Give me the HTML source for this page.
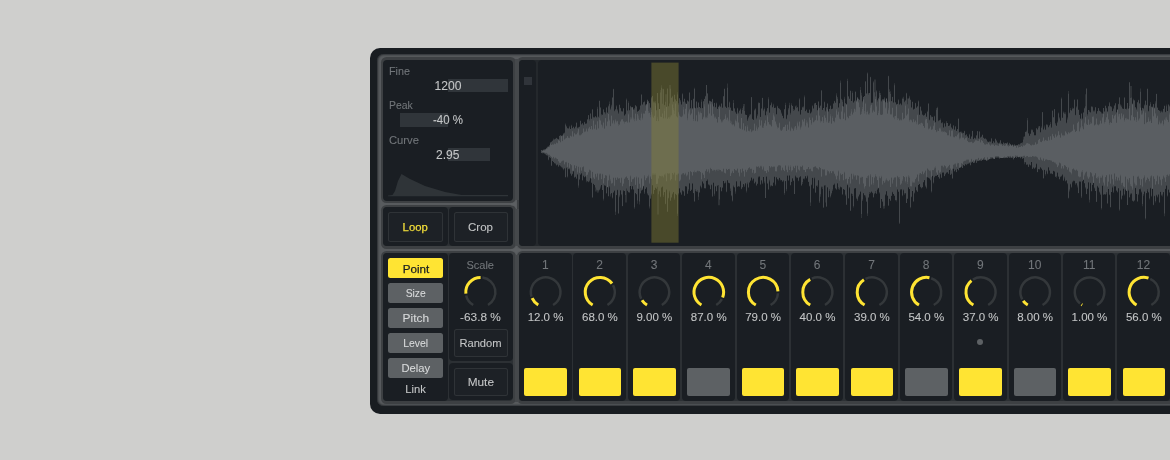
<!DOCTYPE html>
<html><head><meta charset="utf-8"><title>Device</title>
<style>
html,body{margin:0;padding:0;}
body{width:1170px;height:460px;overflow:hidden;background:#cfcfcd;position:relative;font-family:"Liberation Sans",sans-serif;}
#root{position:absolute;left:0;top:0;width:1170px;height:460px;overflow:hidden;}
#root div{position:absolute;box-sizing:border-box;}
svg{position:absolute;left:0;top:0;will-change:transform;}
svg text{font-family:"Liberation Sans",sans-serif;stroke:currentColor;stroke-width:0.08px;}
</style></head><body>
<div id="root">
<div style="left:370.20px;top:47.80px;width:820.00px;height:365.80px;background:#191d21;border-radius:10px;"></div>
<div style="left:376.90px;top:53.90px;width:820.00px;height:352.60px;background:#585b5e;border-radius:6.5px;box-shadow:inset 0 0 2.2px 0.6px #191d21;"></div>
<div style="left:380.50px;top:57.00px;width:135.00px;height:146.30px;background:#3d4043;border-radius:5.5px;"></div>
<div style="left:383.00px;top:59.50px;width:130.00px;height:141.30px;background:#1a1e23;border-radius:4px;"></div>
<div style="left:380.50px;top:204.90px;width:135.00px;height:43.90px;background:#3d4043;border-radius:5.5px;"></div>
<div style="left:383.00px;top:207.40px;width:130.00px;height:38.90px;background:#2c3034;border-radius:4px;"></div>
<div style="left:383.00px;top:207.40px;width:64.50px;height:38.90px;background:#1a1e23;border-radius:4px;"></div>
<div style="left:448.80px;top:207.40px;width:64.20px;height:38.90px;background:#1a1e23;border-radius:4px;"></div>
<div style="left:516.50px;top:57.00px;width:686.00px;height:191.80px;background:#3d4043;border-radius:5.5px;"></div>
<div style="left:519.00px;top:59.50px;width:700.00px;height:186.80px;background:#24282c;border-radius:4px;"></div>
<div style="left:519.00px;top:59.50px;width:17.30px;height:186.80px;background:#1a1e23;border-radius:4px;"></div>
<div style="left:538.20px;top:59.50px;width:661.80px;height:186.80px;background:#1a1e23;border-radius:4px;"></div>
<div style="left:380.50px;top:250.50px;width:135.00px;height:153.00px;background:#3d4043;border-radius:5.5px;"></div>
<div style="left:383.00px;top:253.00px;width:130.00px;height:147.50px;background:#2c3034;border-radius:4px;"></div>
<div style="left:383.00px;top:253.00px;width:64.50px;height:147.50px;background:#1a1e23;border-radius:4px;"></div>
<div style="left:448.80px;top:253.00px;width:64.20px;height:107.50px;background:#1a1e23;border-radius:4px;"></div>
<div style="left:448.80px;top:363.30px;width:64.20px;height:37.20px;background:#1a1e23;border-radius:4px;"></div>
<div style="left:516.50px;top:250.50px;width:686.00px;height:153.00px;background:#3d4043;border-radius:5.5px;"></div>
<div style="left:519.00px;top:253.00px;width:700.00px;height:147.50px;background:#2c3034;border-radius:4px;"></div>
<div style="left:519.00px;top:253.00px;width:52.50px;height:147.50px;background:#1a1e23;border-radius:4px;"></div>
<div style="left:573.39px;top:253.00px;width:52.50px;height:147.50px;background:#1a1e23;border-radius:4px;"></div>
<div style="left:627.78px;top:253.00px;width:52.50px;height:147.50px;background:#1a1e23;border-radius:4px;"></div>
<div style="left:682.17px;top:253.00px;width:52.50px;height:147.50px;background:#1a1e23;border-radius:4px;"></div>
<div style="left:736.56px;top:253.00px;width:52.50px;height:147.50px;background:#1a1e23;border-radius:4px;"></div>
<div style="left:790.95px;top:253.00px;width:52.50px;height:147.50px;background:#1a1e23;border-radius:4px;"></div>
<div style="left:845.34px;top:253.00px;width:52.50px;height:147.50px;background:#1a1e23;border-radius:4px;"></div>
<div style="left:899.73px;top:253.00px;width:52.50px;height:147.50px;background:#1a1e23;border-radius:4px;"></div>
<div style="left:954.12px;top:253.00px;width:52.50px;height:147.50px;background:#1a1e23;border-radius:4px;"></div>
<div style="left:1008.51px;top:253.00px;width:52.50px;height:147.50px;background:#1a1e23;border-radius:4px;"></div>
<div style="left:1062.90px;top:253.00px;width:52.50px;height:147.50px;background:#1a1e23;border-radius:4px;"></div>
<div style="left:1117.29px;top:253.00px;width:52.50px;height:147.50px;background:#1a1e23;border-radius:4px;"></div>
<div style="left:1171.68px;top:253.00px;width:52.50px;height:147.50px;background:#1a1e23;border-radius:4px;"></div>
<div style="left:515.40px;top:59.00px;width:3.40px;height:140.50px;background:#45484b;border-radius:0px;"></div>
<div style="left:515.40px;top:209.00px;width:3.40px;height:36.50px;background:#45484b;border-radius:0px;"></div>
<div style="left:515.40px;top:254.60px;width:3.40px;height:147.70px;background:#45484b;border-radius:0px;"></div>
<div style="left:448.00px;top:79.00px;width:60.00px;height:13.00px;background:#30353a;border-radius:0px;"></div>
<div style="left:400.00px;top:113.00px;width:48.00px;height:13.50px;background:#30353a;border-radius:0px;"></div>
<div style="left:448.00px;top:148.00px;width:42.00px;height:13.00px;background:#30353a;border-radius:0px;"></div>
<div style="left:524.30px;top:77.00px;width:7.70px;height:7.70px;background:#30343a;border-radius:0px;"></div>
<div style="left:388.00px;top:212.20px;width:55.00px;height:29.70px;background:#1d2126;border-radius:2.5px;box-shadow:inset 0 0 0 1px #2f3337;"></div>
<div style="left:453.60px;top:212.20px;width:54.60px;height:29.70px;background:#1d2126;border-radius:2.5px;box-shadow:inset 0 0 0 1px #2f3337;"></div>
<div style="left:454.10px;top:328.70px;width:54.00px;height:27.90px;background:#1d2126;border-radius:2.5px;box-shadow:inset 0 0 0 1px #2f3337;"></div>
<div style="left:454.10px;top:368.30px;width:54.00px;height:27.40px;background:#1d2126;border-radius:2.5px;box-shadow:inset 0 0 0 1px #2f3337;"></div>
<div style="left:388.00px;top:258.00px;width:55.00px;height:19.60px;background:#ffe433;border-radius:2.5px;"></div>
<div style="left:388.00px;top:283.00px;width:55.00px;height:19.60px;background:#5d6164;border-radius:2.5px;"></div>
<div style="left:388.00px;top:308.00px;width:55.00px;height:19.60px;background:#5d6164;border-radius:2.5px;"></div>
<div style="left:388.00px;top:333.00px;width:55.00px;height:19.60px;background:#5d6164;border-radius:2.5px;"></div>
<div style="left:388.00px;top:358.00px;width:55.00px;height:19.60px;background:#5d6164;border-radius:2.5px;"></div>
<div style="left:524.30px;top:368.30px;width:42.50px;height:27.40px;background:#ffe433;border-radius:2px;"></div>
<div style="left:578.69px;top:368.30px;width:42.50px;height:27.40px;background:#ffe433;border-radius:2px;"></div>
<div style="left:633.08px;top:368.30px;width:42.50px;height:27.40px;background:#ffe433;border-radius:2px;"></div>
<div style="left:687.47px;top:368.30px;width:42.50px;height:27.40px;background:#5d6164;border-radius:2px;"></div>
<div style="left:741.86px;top:368.30px;width:42.50px;height:27.40px;background:#ffe433;border-radius:2px;"></div>
<div style="left:796.25px;top:368.30px;width:42.50px;height:27.40px;background:#ffe433;border-radius:2px;"></div>
<div style="left:850.64px;top:368.30px;width:42.50px;height:27.40px;background:#ffe433;border-radius:2px;"></div>
<div style="left:905.03px;top:368.30px;width:42.50px;height:27.40px;background:#5d6164;border-radius:2px;"></div>
<div style="left:959.42px;top:368.30px;width:42.50px;height:27.40px;background:#ffe433;border-radius:2px;"></div>
<div style="left:1013.81px;top:368.30px;width:42.50px;height:27.40px;background:#5d6164;border-radius:2px;"></div>
<div style="left:1068.20px;top:368.30px;width:42.50px;height:27.40px;background:#ffe433;border-radius:2px;"></div>
<div style="left:1122.59px;top:368.30px;width:42.50px;height:27.40px;background:#ffe433;border-radius:2px;"></div>
<div style="left:1176.98px;top:368.30px;width:42.50px;height:27.40px;background:#ffe433;border-radius:2px;"></div>
<div style="left:977.37px;top:339.00px;width:6.00px;height:6.00px;background:#5d6164;border-radius:3px;"></div>
<svg width="1170" height="460" viewBox="0 0 1170 460">
<path d="M473.20 305.02 A14.8 14.8 0 0 1 466.16 295.45" fill="none" stroke="#34383b" stroke-width="2.5"/>
<path d="M482.40 277.51 A14.8 14.8 0 0 1 488.00 305.02" fill="none" stroke="#34383b" stroke-width="2.5"/>
<path d="M465.87 293.67 A14.8 14.8 0 0 1 480.60 277.40" fill="none" stroke="#ffe433" stroke-width="3.0"/>
<path d="M531.50 296.53 A14.8 14.8 0 1 1 553.05 305.02" fill="none" stroke="#34383b" stroke-width="2.5"/>
<path d="M538.25 305.02 A14.8 14.8 0 0 1 532.13 298.22" fill="none" stroke="#ffe433" stroke-width="3.0"/>
<path d="M612.98 285.02 A14.8 14.8 0 0 1 607.44 305.02" fill="none" stroke="#34383b" stroke-width="2.5"/>
<path d="M592.64 305.02 A14.8 14.8 0 1 1 612.01 283.50" fill="none" stroke="#ffe433" stroke-width="3.0"/>
<path d="M641.13 298.69 A14.8 14.8 0 1 1 661.83 305.02" fill="none" stroke="#34383b" stroke-width="2.5"/>
<path d="M647.03 305.02 A14.8 14.8 0 0 1 642.02 300.26" fill="none" stroke="#ffe433" stroke-width="3.0"/>
<path d="M721.89 299.15 A14.8 14.8 0 0 1 716.22 305.02" fill="none" stroke="#34383b" stroke-width="2.5"/>
<path d="M701.42 305.02 A14.8 14.8 0 1 1 722.64 297.50" fill="none" stroke="#ffe433" stroke-width="3.0"/>
<path d="M777.97 293.23 A14.8 14.8 0 0 1 770.61 305.02" fill="none" stroke="#34383b" stroke-width="2.5"/>
<path d="M755.81 305.02 A14.8 14.8 0 1 1 777.99 291.43" fill="none" stroke="#ffe433" stroke-width="3.0"/>
<path d="M811.82 278.58 A14.8 14.8 0 0 1 825.00 305.02" fill="none" stroke="#34383b" stroke-width="2.5"/>
<path d="M810.20 305.02 A14.8 14.8 0 0 1 810.20 279.38" fill="none" stroke="#ffe433" stroke-width="3.0"/>
<path d="M865.50 278.90 A14.8 14.8 0 0 1 879.39 305.02" fill="none" stroke="#34383b" stroke-width="2.5"/>
<path d="M864.59 305.02 A14.8 14.8 0 0 1 863.93 279.79" fill="none" stroke="#ffe433" stroke-width="3.0"/>
<path d="M931.20 278.21 A14.8 14.8 0 0 1 933.78 305.02" fill="none" stroke="#34383b" stroke-width="2.5"/>
<path d="M918.98 305.02 A14.8 14.8 0 0 1 929.46 277.72" fill="none" stroke="#ffe433" stroke-width="3.0"/>
<path d="M972.93 279.65 A14.8 14.8 0 1 1 988.17 305.02" fill="none" stroke="#34383b" stroke-width="2.5"/>
<path d="M973.37 305.02 A14.8 14.8 0 0 1 971.46 280.70" fill="none" stroke="#ffe433" stroke-width="3.0"/>
<path d="M1022.22 299.38 A14.8 14.8 0 1 1 1042.56 305.02" fill="none" stroke="#34383b" stroke-width="2.5"/>
<path d="M1027.76 305.02 A14.8 14.8 0 0 1 1023.19 300.90" fill="none" stroke="#ffe433" stroke-width="3.0"/>
<path d="M1080.04 303.54 A14.8 14.8 0 1 1 1096.95 305.02" fill="none" stroke="#34383b" stroke-width="2.5"/>
<path d="M1082.15 305.02 A14.8 14.8 0 0 1 1081.49 304.61" fill="none" stroke="#ffe433" stroke-width="3.0"/>
<path d="M1150.19 278.79 A14.8 14.8 0 0 1 1151.34 305.02" fill="none" stroke="#34383b" stroke-width="2.5"/>
<path d="M1136.54 305.02 A14.8 14.8 0 0 1 1148.51 278.12" fill="none" stroke="#ffe433" stroke-width="3.0"/>
<path d="M1200.13 277.51 A14.8 14.8 0 0 1 1205.73 305.02" fill="none" stroke="#34383b" stroke-width="2.5"/>
<path d="M1190.93 305.02 A14.8 14.8 0 0 1 1198.33 277.40" fill="none" stroke="#ffe433" stroke-width="3.0"/>
<path d="M541.0 151.6V150.1h0.5V150.0h0.5V150.5h0.5V150.3h0.5V149.8h0.5V149.5h0.5V149.4h0.5V149.2h0.5V149.1h0.5V148.9h0.5V148.1h0.5V147.7h0.5V147.0h0.5V146.4h0.5V146.7h0.5V146.2h0.5V145.5h0.5V144.9h0.5V142.6h0.5V142.2h0.5V142.1h0.5V141.4h0.5V141.1h0.5V140.6h0.5V139.7h0.5V138.6h0.5V139.7h0.5V139.0h0.5V139.1h0.5V138.4h0.5V138.1h0.5V137.7h0.5V139.0h0.5V138.5h0.5V139.5h0.5V138.9h0.5V136.0h0.5V135.7h0.5V135.4h0.5V135.0h0.5V136.1h0.5V135.6h0.5V135.6h0.5V135.4h0.5V133.5h0.5V133.4h0.5V133.2h0.5V132.6h0.5V124.7h0.5V123.5h0.5V126.7h0.5V125.7h0.5V128.1h0.5V128.5h0.5V128.9h0.5V128.0h0.5V127.3h0.5V125.8h0.5V128.9h0.5V128.9h0.5V125.7h0.5V124.7h0.5V127.9h0.5V128.3h0.5V127.0h0.5V126.4h0.5V128.5h0.5V128.2h0.5V127.1h0.5V126.2h0.5V122.7h0.5V122.5h0.5V128.3h0.5V127.5h0.5V127.4h0.5V127.2h0.5V126.8h0.5V126.7h0.5V121.1h0.5V120.4h0.5V124.4h0.5V124.2h0.5V123.1h0.5V123.6h0.5V124.4h0.5V125.2h0.5V121.7h0.5V122.2h0.5V123.9h0.5V123.6h0.5V123.9h0.5V123.1h0.5V119.3h0.5V119.4h0.5V115.0h0.5V115.2h0.5V120.4h0.5V119.1h0.5V113.3h0.5V113.8h0.5V119.1h0.5V118.4h0.5V109.0h0.5V109.7h0.5V117.4h0.5V116.8h0.5V117.3h0.5V117.4h0.5V116.6h0.5V116.0h0.5V117.8h0.5V116.9h0.5V106.7h0.5V108.8h0.5V117.3h0.5V116.4h0.5V100.8h0.5V100.7h0.5V107.4h0.5V107.6h0.5V113.9h0.5V115.3h0.5V114.5h0.5V114.9h0.5V109.1h0.5V109.7h0.5V112.1h0.5V112.6h0.5V114.2h0.5V112.6h0.5V107.9h0.5V106.9h0.5V112.2h0.5V112.9h0.5V105.6h0.5V106.6h0.5V104.0h0.5V101.6h0.5V108.4h0.5V109.7h0.5V104.7h0.5V106.4h0.5V97.4h0.5V97.4h0.5V89.2h0.5V88.8h0.5V111.2h0.5V110.4h0.5V109.8h0.5V108.9h0.5V105.2h0.5V106.5h0.5V109.2h0.5V110.4h0.5V112.4h0.5V113.7h0.5V105.1h0.5V104.6h0.5V107.7h0.5V108.3h0.5V111.5h0.5V110.8h0.5V111.2h0.5V111.8h0.5V108.2h0.5V108.3h0.5V115.5h0.5V115.5h0.5V114.4h0.5V113.7h0.5V99.8h0.5V98.4h0.5V110.5h0.5V110.6h0.5V103.0h0.5V101.2h0.5V110.5h0.5V110.1h0.5V106.6h0.5V105.8h0.5V107.6h0.5V107.0h0.5V107.3h0.5V107.4h0.5V109.9h0.5V108.9h0.5V109.6h0.5V108.0h0.5V105.5h0.5V105.1h0.5V106.3h0.5V106.5h0.5V111.9h0.5V111.3h0.5V111.1h0.5V110.8h0.5V109.6h0.5V109.8h0.5V105.0h0.5V105.9h0.5V95.0h0.5V94.1h0.5V104.4h0.5V104.5h0.5V102.4h0.5V102.1h0.5V101.9h0.5V100.8h0.5V105.4h0.5V104.4h0.5V104.3h0.5V104.3h0.5V99.8h0.5V101.7h0.5V101.1h0.5V101.5h0.5V103.1h0.5V103.2h0.5V107.3h0.5V107.9h0.5V97.1h0.5V98.3h0.5V95.7h0.5V96.0h0.5V101.3h0.5V102.5h0.5V102.6h0.5V101.4h0.5V102.8h0.5V101.1h0.5V110.5h0.5V110.1h0.5V93.1h0.5V93.1h0.5V103.3h0.5V103.2h0.5V108.9h0.5V109.1h0.5V92.4h0.5V90.0h0.5V85.3h0.5V87.7h0.5V88.7h0.5V103.8h0.5V89.2h0.5V88.8h0.5V105.2h0.5V104.8h0.5V101.7h0.5V94.2h0.5V94.2h0.5V106.8h0.5V88.1h0.5V88.9h0.5V106.6h0.5V105.9h0.5V103.6h0.5V84.9h0.5V84.9h0.5V88.7h0.5V98.1h0.5V97.6h0.5V95.8h0.5V96.7h0.5V101.2h0.5V101.9h0.5V94.9h0.5V94.5h0.5V99.8h0.5V99.1h0.5V101.3h0.5V101.0h0.5V92.3h0.5V94.4h0.5V104.4h0.5V103.1h0.5V97.9h0.5V98.4h0.5V101.6h0.5V100.1h0.5V104.8h0.5V104.2h0.5V93.2h0.5V94.3h0.5V101.8h0.5V101.5h0.5V98.7h0.5V98.7h0.5V103.4h0.5V102.2h0.5V103.7h0.5V104.1h0.5V101.0h0.5V100.1h0.5V101.6h0.5V101.6h0.5V93.1h0.5V92.0h0.5V108.0h0.5V108.4h0.5V99.9h0.5V100.2h0.5V108.6h0.5V108.4h0.5V98.4h0.5V99.1h0.5V87.7h0.5V89.1h0.5V108.6h0.5V108.0h0.5V101.2h0.5V101.7h0.5V107.2h0.5V108.0h0.5V102.5h0.5V102.4h0.5V107.1h0.5V106.9h0.5V108.0h0.5V108.3h0.5V101.7h0.5V99.4h0.5V108.2h0.5V108.0h0.5V101.6h0.5V101.1h0.5V98.9h0.5V98.8h0.5V96.6h0.5V95.7h0.5V84.9h0.5V84.9h0.5V93.6h0.5V93.2h0.5V104.8h0.5V103.6h0.5V100.7h0.5V100.7h0.5V102.3h0.5V101.0h0.5V101.7h0.5V101.7h0.5V98.7h0.5V99.3h0.5V105.9h0.5V106.9h0.5V102.8h0.5V103.0h0.5V107.0h0.5V107.5h0.5V102.5h0.5V103.4h0.5V108.8h0.5V109.1h0.5V106.4h0.5V106.9h0.5V105.7h0.5V104.7h0.5V106.5h0.5V106.8h0.5V103.0h0.5V104.0h0.5V107.6h0.5V107.8h0.5V96.1h0.5V96.5h0.5V88.7h0.5V88.7h0.5V106.8h0.5V106.4h0.5V108.1h0.5V107.8h0.5V87.7h0.5V83.4h0.5V107.1h0.5V107.5h0.5V102.4h0.5V101.6h0.5V107.2h0.5V108.1h0.5V110.2h0.5V110.7h0.5V110.7h0.5V111.1h0.5V100.1h0.5V102.9h0.5V108.5h0.5V108.3h0.5V112.4h0.5V111.4h0.5V114.1h0.5V113.5h0.5V107.8h0.5V108.5h0.5V112.5h0.5V113.5h0.5V110.6h0.5V110.7h0.5V108.6h0.5V109.5h0.5V113.4h0.5V113.7h0.5V108.0h0.5V109.9h0.5V106.3h0.5V104.0h0.5V104.0h0.5V111.0h0.5V114.7h0.5V114.4h0.5V114.9h0.5V115.1h0.5V119.6h0.5V121.0h0.5V118.3h0.5V117.0h0.5V114.4h0.5V116.0h0.5V113.9h0.5V114.7h0.5V97.3h0.5V96.9h0.5V119.3h0.5V118.8h0.5V120.1h0.5V119.7h0.5V109.4h0.5V110.4h0.5V109.3h0.5V108.3h0.5V119.2h0.5V117.8h0.5V115.7h0.5V114.2h0.5V102.3h0.5V103.3h0.5V102.7h0.5V102.9h0.5V116.7h0.5V116.9h0.5V108.8h0.5V108.3h0.5V97.7h0.5V97.9h0.5V110.7h0.5V109.4h0.5V107.5h0.5V108.9h0.5V115.3h0.5V115.2h0.5V110.7h0.5V111.7h0.5V108.3h0.5V108.0h0.5V99.2h0.5V97.2h0.5V112.4h0.5V112.8h0.5V105.0h0.5V105.6h0.5V103.6h0.5V102.2h0.5V107.5h0.5V107.1h0.5V103.7h0.5V105.4h0.5V108.1h0.5V107.9h0.5V107.7h0.5V107.4h0.5V114.1h0.5V114.6h0.5V106.6h0.5V105.8h0.5V108.2h0.5V107.9h0.5V109.0h0.5V108.4h0.5V109.7h0.5V110.3h0.5V113.7h0.5V112.5h0.5V115.7h0.5V115.8h0.5V117.9h0.5V118.5h0.5V109.0h0.5V109.4h0.5V105.1h0.5V102.8h0.5V119.2h0.5V118.4h0.5V114.4h0.5V115.3h0.5V109.6h0.5V108.1h0.5V105.3h0.5V102.7h0.5V114.4h0.5V112.7h0.5V103.2h0.5V104.9h0.5V105.9h0.5V105.8h0.5V109.0h0.5V111.1h0.5V110.2h0.5V109.6h0.5V106.8h0.5V105.8h0.5V105.6h0.5V108.0h0.5V107.0h0.5V107.4h0.5V111.6h0.5V111.1h0.5V99.4h0.5V98.3h0.5V115.1h0.5V114.0h0.5V109.8h0.5V109.9h0.5V107.5h0.5V106.7h0.5V107.5h0.5V106.2h0.5V95.4h0.5V97.2h0.5V111.3h0.5V110.9h0.5V110.1h0.5V109.2h0.5V112.9h0.5V112.2h0.5V112.8h0.5V112.9h0.5V110.1h0.5V109.2h0.5V113.8h0.5V113.0h0.5V112.5h0.5V111.5h0.5V106.3h0.5V105.2h0.5V108.7h0.5V108.2h0.5V104.3h0.5V102.9h0.5V102.9h0.5V102.8h0.5V105.0h0.5V104.9h0.5V110.2h0.5V110.3h0.5V101.5h0.5V101.4h0.5V107.4h0.5V108.1h0.5V106.0h0.5V105.3h0.5V90.2h0.5V90.5h0.5V109.7h0.5V109.9h0.5V107.9h0.5V108.0h0.5V102.3h0.5V101.5h0.5V111.4h0.5V110.6h0.5V107.0h0.5V107.6h0.5V103.2h0.5V103.8h0.5V111.6h0.5V111.5h0.5V109.0h0.5V108.7h0.5V105.7h0.5V105.4h0.5V109.1h0.5V109.2h0.5V108.9h0.5V108.2h0.5V103.0h0.5V103.9h0.5V101.2h0.5V100.7h0.5V102.9h0.5V102.6h0.5V93.3h0.5V95.4h0.5V97.0h0.5V98.8h0.5V107.6h0.5V107.5h0.5V103.5h0.5V103.0h0.5V82.8h0.5V80.5h0.5V98.8h0.5V99.4h0.5V100.0h0.5V101.7h0.5V106.5h0.5V106.5h0.5V96.7h0.5V98.7h0.5V103.4h0.5V103.1h0.5V104.0h0.5V104.3h0.5V81.0h0.5V78.7h0.5V96.0h0.5V96.7h0.5V98.9h0.5V98.5h0.5V90.8h0.5V90.7h0.5V101.1h0.5V100.9h0.5V91.2h0.5V92.9h0.5V102.5h0.5V102.5h0.5V101.2h0.5V100.6h0.5V91.7h0.5V91.6h0.5V100.6h0.5V101.8h0.5V96.9h0.5V98.5h0.5V98.5h0.5V99.0h0.5V100.1h0.5V99.5h0.5V87.0h0.5V90.0h0.5V92.8h0.5V95.5h0.5V100.9h0.5V102.2h0.5V96.9h0.5V99.4h0.5V96.1h0.5V95.9h0.5V81.8h0.5V81.0h0.5V93.3h0.5V93.8h0.5V73.5h0.5V72.6h0.5V94.6h0.5V93.1h0.5V92.9h0.5V92.9h0.5V77.2h0.5V76.7h0.5V102.7h0.5V104.8h0.5V103.1h0.5V102.2h0.5V81.2h0.5V82.5h0.5V92.2h0.5V79.4h0.5V79.4h0.5V96.5h0.5V91.5h0.5V90.2h0.5V100.1h0.5V101.6h0.5V98.5h0.5V98.3h0.5V92.9h0.5V90.7h0.5V95.0h0.5V93.0h0.5V100.6h0.5V101.6h0.5V99.1h0.5V99.8h0.5V98.9h0.5V99.4h0.5V97.3h0.5V98.6h0.5V102.2h0.5V102.2h0.5V98.2h0.5V98.9h0.5V101.2h0.5V102.7h0.5V75.8h0.5V76.2h0.5V89.3h0.5V92.1h0.5V91.2h0.5V93.9h0.5V101.1h0.5V101.3h0.5V97.0h0.5V96.8h0.5V102.8h0.5V102.3h0.5V85.2h0.5V83.2h0.5V102.0h0.5V102.8h0.5V104.5h0.5V104.5h0.5V103.7h0.5V103.9h0.5V100.3h0.5V99.3h0.5V105.1h0.5V104.1h0.5V103.5h0.5V103.5h0.5V105.3h0.5V104.4h0.5V99.0h0.5V97.7h0.5V98.7h0.5V96.8h0.5V101.4h0.5V102.3h0.5V100.5h0.5V100.6h0.5V92.8h0.5V93.4h0.5V104.3h0.5V98.5h0.5V98.5h0.5V98.5h0.5V95.8h0.5V97.5h0.5V99.6h0.5V100.0h0.5V107.6h0.5V107.4h0.5V101.9h0.5V101.5h0.5V108.9h0.5V109.9h0.5V108.6h0.5V109.1h0.5V102.8h0.5V103.2h0.5V107.8h0.5V107.4h0.5V106.8h0.5V106.0h0.5V101.6h0.5V100.5h0.5V115.0h0.5V114.6h0.5V106.3h0.5V107.0h0.5V110.2h0.5V111.2h0.5V114.3h0.5V114.9h0.5V115.3h0.5V115.7h0.5V114.8h0.5V115.3h0.5V113.3h0.5V113.5h0.5V116.8h0.5V119.0h0.5V112.1h0.5V110.7h0.5V102.9h0.5V104.1h0.5V119.6h0.5V120.2h0.5V114.9h0.5V115.2h0.5V116.3h0.5V117.3h0.5V116.9h0.5V116.7h0.5V120.5h0.5V120.5h0.5V115.8h0.5V116.5h0.5V122.2h0.5V122.3h0.5V108.1h0.5V109.7h0.5V106.8h0.5V108.1h0.5V120.4h0.5V121.3h0.5V120.1h0.5V120.4h0.5V118.6h0.5V120.0h0.5V122.8h0.5V123.3h0.5V123.2h0.5V122.1h0.5V127.4h0.5V127.4h0.5V123.4h0.5V123.3h0.5V126.1h0.5V126.9h0.5V121.0h0.5V122.7h0.5V123.1h0.5V123.0h0.5V125.9h0.5V126.0h0.5V125.8h0.5V125.3h0.5V123.4h0.5V123.7h0.5V127.2h0.5V127.7h0.5V128.9h0.5V128.4h0.5V125.4h0.5V125.2h0.5V129.8h0.5V129.5h0.5V126.1h0.5V126.7h0.5V130.7h0.5V131.1h0.5V128.9h0.5V129.2h0.5V118.5h0.5V118.7h0.5V132.1h0.5V132.4h0.5V131.6h0.5V131.9h0.5V131.6h0.5V132.5h0.5V132.6h0.5V133.4h0.5V132.8h0.5V133.1h0.5V131.2h0.5V130.7h0.5V135.2h0.5V135.2h0.5V134.3h0.5V134.5h0.5V136.2h0.5V136.5h0.5V137.8h0.5V137.9h0.5V133.8h0.5V134.7h0.5V138.7h0.5V138.8h0.5V136.6h0.5V136.5h0.5V130.7h0.5V130.9h0.5V139.2h0.5V139.1h0.5V138.0h0.5V137.5h0.5V138.6h0.5V138.5h0.5V135.6h0.5V135.3h0.5V131.2h0.5V131.0h0.5V138.4h0.5V138.4h0.5V131.1h0.5V132.1h0.5V137.6h0.5V137.4h0.5V136.5h0.5V136.8h0.5V134.6h0.5V135.1h0.5V137.6h0.5V138.1h0.5V138.8h0.5V138.7h0.5V138.6h0.5V138.5h0.5V139.4h0.5V139.6h0.5V141.6h0.5V141.6h0.5V141.7h0.5V141.9h0.5V141.4h0.5V141.6h0.5V141.6h0.5V141.7h0.5V138.5h0.5V138.2h0.5V143.2h0.5V143.0h0.5V141.3h0.5V141.3h0.5V142.8h0.5V142.6h0.5V138.8h0.5V138.7h0.5V140.5h0.5V140.5h0.5V142.4h0.5V142.4h0.5V143.4h0.5V143.3h0.5V142.7h0.5V142.6h0.5V140.1h0.5V140.6h0.5V143.3h0.5V143.4h0.5V144.0h0.5V144.2h0.5V142.6h0.5V142.5h0.5V143.6h0.5V143.6h0.5V143.1h0.5V143.1h0.5V143.8h0.5V143.6h0.5V142.6h0.5V142.5h0.5V144.6h0.5V144.7h0.5V142.8h0.5V143.2h0.5V144.5h0.5V144.5h0.5V145.2h0.5V145.3h0.5V144.7h0.5V144.6h0.5V145.4h0.5V145.4h0.5V144.5h0.5V144.6h0.5V145.4h0.5V145.5h0.5V145.1h0.5V145.3h0.5V145.5h0.5V145.5h0.5V144.4h0.5V144.1h0.5V144.6h0.5V144.5h0.5V143.6h0.5V143.2h0.5V142.9h0.5V142.7h0.5V143.3h0.5V142.1h0.5V139.5h0.5V136.7h0.5V136.2h0.5V136.7h0.5V131.7h0.5V131.9h0.5V130.6h0.5V131.7h0.5V120.2h0.5V118.0h0.5V133.6h0.5V133.2h0.5V135.7h0.5V135.8h0.5V133.5h0.5V133.9h0.5V130.2h0.5V129.2h0.5V130.3h0.5V129.6h0.5V132.4h0.5V132.1h0.5V135.4h0.5V135.1h0.5V135.0h0.5V135.4h0.5V128.6h0.5V128.1h0.5V129.6h0.5V129.5h0.5V127.8h0.5V126.3h0.5V126.3h0.5V126.0h0.5V132.5h0.5V131.9h0.5V128.0h0.5V126.5h0.5V112.3h0.5V112.0h0.5V129.3h0.5V129.7h0.5V127.4h0.5V125.6h0.5V129.7h0.5V129.5h0.5V125.1h0.5V124.1h0.5V124.5h0.5V125.3h0.5V127.2h0.5V127.3h0.5V125.2h0.5V125.4h0.5V124.0h0.5V121.9h0.5V126.8h0.5V128.0h0.5V110.8h0.5V110.5h0.5V116.9h0.5V117.5h0.5V109.1h0.5V109.3h0.5V124.4h0.5V123.0h0.5V126.1h0.5V125.4h0.5V122.7h0.5V121.5h0.5V112.6h0.5V113.6h0.5V118.4h0.5V117.2h0.5V120.5h0.5V120.7h0.5V98.8h0.5V97.6h0.5V118.0h0.5V117.5h0.5V111.6h0.5V112.7h0.5V114.1h0.5V112.5h0.5V114.2h0.5V112.2h0.5V123.3h0.5V122.4h0.5V119.5h0.5V117.5h0.5V93.8h0.5V90.9h0.5V112.4h0.5V113.3h0.5V108.1h0.5V110.0h0.5V110.0h0.5V111.1h0.5V108.9h0.5V107.6h0.5V108.0h0.5V108.8h0.5V99.7h0.5V99.4h0.5V115.2h0.5V114.8h0.5V106.2h0.5V107.5h0.5V100.1h0.5V99.1h0.5V109.7h0.5V109.8h0.5V114.8h0.5V114.9h0.5V118.8h0.5V118.4h0.5V113.8h0.5V113.3h0.5V119.3h0.5V118.3h0.5V112.9h0.5V111.9h0.5V108.4h0.5V107.8h0.5V106.3h0.5V94.2h0.5V88.5h0.5V88.6h0.5V115.4h0.5V114.0h0.5V110.1h0.5V110.1h0.5V110.4h0.5V111.9h0.5V112.7h0.5V111.9h0.5V106.0h0.5V107.1h0.5V106.4h0.5V107.3h0.5V110.4h0.5V111.6h0.5V110.3h0.5V111.6h0.5V107.1h0.5V107.4h0.5V113.5h0.5V113.8h0.5V111.3h0.5V110.9h0.5V108.2h0.5V108.0h0.5V110.6h0.5V111.1h0.5V111.6h0.5V111.7h0.5V113.4h0.5V112.3h0.5V113.4h0.5V113.5h0.5V107.9h0.5V108.0h0.5V111.8h0.5V111.2h0.5V106.1h0.5V105.4h0.5V107.7h0.5V108.4h0.5V111.6h0.5V112.3h0.5V106.6h0.5V106.0h0.5V102.1h0.5V103.3h0.5V105.9h0.5V106.6h0.5V107.2h0.5V106.6h0.5V111.1h0.5V111.2h0.5V109.2h0.5V108.3h0.5V105.1h0.5V105.9h0.5V102.9h0.5V103.4h0.5V112.4h0.5V112.3h0.5V108.9h0.5V109.8h0.5V104.3h0.5V103.8h0.5V97.5h0.5V97.2h0.5V104.3h0.5V105.4h0.5V106.9h0.5V105.6h0.5V108.4h0.5V108.6h0.5V109.1h0.5V108.8h0.5V97.1h0.5V97.9h0.5V108.9h0.5V108.7h0.5V109.6h0.5V108.6h0.5V102.9h0.5V103.1h0.5V108.5h0.5V108.8h0.5V82.5h0.5V82.0h0.5V98.0h0.5V86.0h0.5V86.0h0.5V97.4h0.5V103.4h0.5V103.7h0.5V100.3h0.5V98.7h0.5V100.1h0.5V100.8h0.5V106.9h0.5V107.4h0.5V108.6h0.5V109.7h0.5V102.5h0.5V102.0h0.5V100.2h0.5V99.8h0.5V103.4h0.5V103.3h0.5V88.4h0.5V91.8h0.5V110.1h0.5V110.7h0.5V107.8h0.5V108.1h0.5V108.7h0.5V108.3h0.5V104.6h0.5V105.6h0.5V100.2h0.5V100.9h0.5V104.8h0.5V105.2h0.5V88.7h0.5V88.7h0.5V111.5h0.5V110.8h0.5V105.5h0.5V105.9h0.5V103.8h0.5V102.1h0.5V107.0h0.5V106.6h0.5V107.4h0.5V106.4h0.5V103.9h0.5V104.2h0.5V107.8h0.5V107.4h0.5V101.3h0.5V103.5h0.5V94.1h0.5V93.7h0.5V107.7h0.5V107.6h0.5V109.9h0.5V109.9h0.5V111.0h0.5V110.4h0.5V112.7h0.5V111.2h0.5V111.7h0.5V110.4h0.5V112.4h0.5V111.5h0.5V108.8h0.5V109.1h0.5V105.6h0.5V105.9h0.5V112.2h0.5V111.8h0.5V106.2h0.5V104.4h0.5V111.1h0.5V111.1h0.5V104.4h0.5V104.4h0.5V106.5h0.5V105.5h0.5V106.8h0.5V106.4h0.5V108.9h0.5V109.4h0.5V151.6V207.5h-0.5V207.5h-0.5V186.6h-0.5V186.2h-0.5V192.6h-0.5V192.4h-0.5V189.4h-0.5V189.8h-0.5V196.5h-0.5V195.6h-0.5V185.3h-0.5V186.0h-0.5V188.7h-0.5V188.9h-0.5V213.6h-0.5V216.2h-0.5V192.3h-0.5V192.1h-0.5V194.6h-0.5V196.5h-0.5V195.8h-0.5V194.7h-0.5V191.8h-0.5V191.9h-0.5V202.5h-0.5V202.5h-0.5V193.9h-0.5V195.0h-0.5V197.6h-0.5V196.4h-0.5V194.8h-0.5V195.4h-0.5V202.4h-0.5V201.0h-0.5V196.3h-0.5V195.8h-0.5V204.7h-0.5V205.3h-0.5V188.6h-0.5V189.1h-0.5V196.7h-0.5V195.7h-0.5V187.8h-0.5V188.5h-0.5V199.6h-0.5V198.2h-0.5V192.4h-0.5V192.3h-0.5V190.7h-0.5V189.1h-0.5V193.1h-0.5V193.3h-0.5V218.3h-0.5V219.4h-0.5V191.2h-0.5V191.9h-0.5V194.0h-0.5V195.7h-0.5V203.9h-0.5V206.2h-0.5V191.5h-0.5V192.4h-0.5V188.5h-0.5V189.4h-0.5V189.1h-0.5V189.5h-0.5V195.0h-0.5V193.7h-0.5V201.4h-0.5V201.4h-0.5V193.9h-0.5V193.9h-0.5V188.3h-0.5V188.1h-0.5V200.7h-0.5V200.3h-0.5V202.1h-0.5V201.1h-0.5V201.1h-0.5V200.4h-0.5V194.1h-0.5V192.9h-0.5V194.7h-0.5V193.4h-0.5V197.8h-0.5V196.9h-0.5V191.1h-0.5V189.8h-0.5V205.0h-0.5V205.1h-0.5V190.9h-0.5V190.4h-0.5V189.8h-0.5V189.2h-0.5V194.3h-0.5V195.6h-0.5V188.9h-0.5V188.5h-0.5V195.8h-0.5V195.4h-0.5V199.8h-0.5V198.8h-0.5V190.6h-0.5V190.8h-0.5V210.7h-0.5V209.4h-0.5V188.5h-0.5V188.0h-0.5V191.7h-0.5V192.4h-0.5V190.9h-0.5V190.3h-0.5V186.8h-0.5V186.1h-0.5V186.0h-0.5V186.7h-0.5V192.9h-0.5V191.7h-0.5V186.5h-0.5V187.7h-0.5V191.9h-0.5V192.1h-0.5V207.1h-0.5V207.4h-0.5V195.2h-0.5V194.6h-0.5V188.9h-0.5V189.1h-0.5V203.6h-0.5V203.6h-0.5V192.0h-0.5V193.7h-0.5V194.4h-0.5V194.5h-0.5V194.3h-0.5V194.3h-0.5V195.0h-0.5V194.2h-0.5V185.8h-0.5V185.8h-0.5V208.1h-0.5V209.6h-0.5V194.9h-0.5V193.8h-0.5V191.5h-0.5V192.5h-0.5V187.7h-0.5V187.6h-0.5V186.4h-0.5V185.7h-0.5V202.0h-0.5V201.7h-0.5V191.0h-0.5V191.0h-0.5V187.6h-0.5V188.5h-0.5V182.9h-0.5V182.8h-0.5V184.7h-0.5V185.1h-0.5V190.9h-0.5V191.5h-0.5V182.7h-0.5V183.2h-0.5V202.5h-0.5V199.8h-0.5V182.4h-0.5V182.3h-0.5V188.9h-0.5V188.5h-0.5V194.1h-0.5V194.2h-0.5V187.2h-0.5V188.5h-0.5V183.6h-0.5V183.1h-0.5V179.8h-0.5V179.6h-0.5V181.2h-0.5V181.2h-0.5V198.1h-0.5V196.5h-0.5V181.9h-0.5V181.2h-0.5V181.5h-0.5V181.6h-0.5V192.9h-0.5V193.2h-0.5V187.4h-0.5V185.6h-0.5V183.1h-0.5V183.5h-0.5V184.7h-0.5V183.2h-0.5V181.2h-0.5V180.8h-0.5V180.6h-0.5V181.2h-0.5V181.4h-0.5V182.5h-0.5V187.7h-0.5V186.8h-0.5V183.7h-0.5V184.5h-0.5V191.4h-0.5V189.5h-0.5V197.8h-0.5V198.6h-0.5V184.2h-0.5V182.9h-0.5V180.4h-0.5V180.2h-0.5V180.8h-0.5V181.6h-0.5V178.6h-0.5V176.8h-0.5V181.0h-0.5V180.2h-0.5V175.2h-0.5V174.3h-0.5V176.5h-0.5V175.8h-0.5V177.2h-0.5V176.4h-0.5V179.2h-0.5V179.2h-0.5V176.7h-0.5V176.4h-0.5V172.7h-0.5V172.4h-0.5V177.7h-0.5V176.2h-0.5V176.5h-0.5V176.9h-0.5V171.5h-0.5V171.4h-0.5V170.9h-0.5V170.8h-0.5V174.3h-0.5V173.9h-0.5V174.1h-0.5V173.0h-0.5V173.6h-0.5V173.8h-0.5V171.1h-0.5V170.0h-0.5V166.9h-0.5V167.7h-0.5V173.6h-0.5V174.2h-0.5V171.6h-0.5V170.4h-0.5V173.9h-0.5V175.5h-0.5V169.9h-0.5V169.8h-0.5V178.6h-0.5V178.2h-0.5V170.0h-0.5V170.4h-0.5V168.4h-0.5V168.7h-0.5V167.7h-0.5V167.0h-0.5V169.6h-0.5V169.2h-0.5V169.3h-0.5V169.0h-0.5V171.9h-0.5V172.3h-0.5V164.3h-0.5V163.4h-0.5V167.5h-0.5V167.4h-0.5V168.3h-0.5V168.9h-0.5V167.6h-0.5V167.5h-0.5V168.7h-0.5V169.0h-0.5V162.0h-0.5V161.9h-0.5V165.5h-0.5V165.2h-0.5V164.0h-0.5V164.9h-0.5V166.9h-0.5V166.7h-0.5V164.6h-0.5V164.6h-0.5V164.9h-0.5V164.4h-0.5V162.3h-0.5V162.2h-0.5V164.2h-0.5V162.3h-0.5V158.2h-0.5V157.9h-0.5V158.8h-0.5V158.7h-0.5V157.2h-0.5V157.1h-0.5V158.3h-0.5V158.2h-0.5V157.2h-0.5V157.1h-0.5V157.4h-0.5V157.3h-0.5V156.9h-0.5V156.9h-0.5V157.9h-0.5V157.8h-0.5V157.1h-0.5V157.1h-0.5V157.8h-0.5V157.9h-0.5V159.4h-0.5V159.3h-0.5V157.6h-0.5V157.7h-0.5V157.7h-0.5V158.0h-0.5V157.5h-0.5V157.5h-0.5V157.8h-0.5V157.9h-0.5V157.2h-0.5V157.2h-0.5V158.1h-0.5V157.9h-0.5V157.8h-0.5V158.0h-0.5V157.6h-0.5V157.5h-0.5V158.1h-0.5V158.2h-0.5V157.8h-0.5V157.8h-0.5V158.0h-0.5V158.1h-0.5V158.0h-0.5V157.9h-0.5V158.1h-0.5V158.1h-0.5V158.5h-0.5V158.4h-0.5V157.5h-0.5V157.5h-0.5V157.5h-0.5V157.5h-0.5V157.6h-0.5V157.8h-0.5V157.5h-0.5V157.6h-0.5V158.8h-0.5V158.9h-0.5V158.6h-0.5V158.6h-0.5V158.2h-0.5V158.2h-0.5V158.4h-0.5V158.5h-0.5V158.7h-0.5V158.8h-0.5V159.0h-0.5V159.2h-0.5V159.5h-0.5V159.6h-0.5V160.2h-0.5V160.4h-0.5V160.7h-0.5V160.9h-0.5V159.8h-0.5V159.6h-0.5V159.7h-0.5V160.0h-0.5V159.5h-0.5V159.4h-0.5V159.8h-0.5V159.7h-0.5V160.7h-0.5V160.9h-0.5V160.4h-0.5V160.6h-0.5V160.6h-0.5V160.6h-0.5V161.0h-0.5V161.1h-0.5V161.1h-0.5V161.2h-0.5V162.7h-0.5V163.0h-0.5V160.5h-0.5V160.6h-0.5V162.7h-0.5V162.7h-0.5V162.9h-0.5V162.9h-0.5V161.7h-0.5V161.6h-0.5V162.6h-0.5V162.7h-0.5V165.2h-0.5V165.2h-0.5V163.0h-0.5V163.5h-0.5V163.4h-0.5V163.8h-0.5V163.8h-0.5V164.2h-0.5V164.6h-0.5V165.3h-0.5V163.9h-0.5V164.6h-0.5V165.7h-0.5V166.1h-0.5V165.0h-0.5V165.3h-0.5V168.1h-0.5V168.0h-0.5V166.4h-0.5V166.8h-0.5V167.4h-0.5V167.6h-0.5V167.9h-0.5V168.1h-0.5V170.2h-0.5V170.2h-0.5V169.0h-0.5V169.1h-0.5V172.3h-0.5V171.9h-0.5V169.6h-0.5V170.2h-0.5V171.2h-0.5V171.6h-0.5V168.7h-0.5V168.8h-0.5V178.2h-0.5V178.7h-0.5V173.6h-0.5V174.3h-0.5V174.7h-0.5V175.1h-0.5V169.9h-0.5V170.1h-0.5V173.8h-0.5V173.7h-0.5V172.4h-0.5V171.9h-0.5V173.0h-0.5V172.3h-0.5V173.7h-0.5V174.4h-0.5V176.0h-0.5V176.2h-0.5V172.6h-0.5V172.6h-0.5V172.7h-0.5V172.6h-0.5V177.9h-0.5V177.6h-0.5V173.7h-0.5V174.5h-0.5V178.4h-0.5V178.8h-0.5V177.0h-0.5V177.3h-0.5V174.4h-0.5V174.9h-0.5V176.0h-0.5V175.8h-0.5V175.8h-0.5V175.9h-0.5V176.8h-0.5V177.6h-0.5V183.4h-0.5V182.5h-0.5V175.8h-0.5V175.9h-0.5V192.4h-0.5V191.2h-0.5V179.8h-0.5V180.6h-0.5V178.5h-0.5V178.6h-0.5V178.0h-0.5V177.5h-0.5V177.3h-0.5V177.3h-0.5V187.4h-0.5V188.7h-0.5V185.6h-0.5V186.7h-0.5V180.1h-0.5V180.2h-0.5V182.3h-0.5V182.3h-0.5V187.3h-0.5V187.2h-0.5V187.7h-0.5V188.6h-0.5V187.2h-0.5V186.8h-0.5V184.1h-0.5V184.0h-0.5V185.1h-0.5V184.9h-0.5V191.7h-0.5V191.8h-0.5V190.4h-0.5V190.3h-0.5V186.8h-0.5V187.5h-0.5V193.4h-0.5V192.5h-0.5V201.4h-0.5V201.4h-0.5V191.1h-0.5V191.0h-0.5V197.2h-0.5V196.5h-0.5V208.3h-0.5V207.0h-0.5V189.1h-0.5V189.3h-0.5V187.2h-0.5V187.6h-0.5V199.0h-0.5V198.4h-0.5V202.9h-0.5V202.9h-0.5V193.1h-0.5V193.5h-0.5V193.2h-0.5V194.7h-0.5V189.5h-0.5V190.4h-0.5V195.3h-0.5V196.2h-0.5V189.5h-0.5V189.3h-0.5V189.0h-0.5V190.3h-0.5V224.0h-0.5V222.8h-0.5V191.6h-0.5V192.1h-0.5V189.6h-0.5V189.6h-0.5V201.4h-0.5V199.9h-0.5V200.3h-0.5V200.3h-0.5V195.9h-0.5V195.4h-0.5V194.0h-0.5V194.1h-0.5V192.4h-0.5V191.7h-0.5V195.8h-0.5V196.1h-0.5V200.6h-0.5V201.1h-0.5V198.8h-0.5V199.1h-0.5V205.4h-0.5V205.7h-0.5V196.0h-0.5V195.6h-0.5V191.3h-0.5V191.3h-0.5V195.3h-0.5V194.2h-0.5V208.6h-0.5V205.7h-0.5V206.3h-0.5V208.7h-0.5V202.1h-0.5V201.2h-0.5V199.1h-0.5V199.1h-0.5V207.9h-0.5V207.9h-0.5V192.3h-0.5V193.4h-0.5V187.8h-0.5V188.3h-0.5V188.7h-0.5V190.1h-0.5V193.5h-0.5V193.9h-0.5V193.1h-0.5V191.1h-0.5V194.2h-0.5V193.2h-0.5V197.3h-0.5V197.6h-0.5V192.7h-0.5V193.3h-0.5V191.6h-0.5V191.8h-0.5V192.6h-0.5V193.3h-0.5V191.9h-0.5V194.0h-0.5V196.9h-0.5V198.0h-0.5V213.6h-0.5V216.0h-0.5V201.5h-0.5V201.7h-0.5V195.5h-0.5V197.4h-0.5V195.0h-0.5V195.6h-0.5V193.1h-0.5V193.4h-0.5V201.1h-0.5V199.5h-0.5V217.9h-0.5V214.1h-0.5V191.8h-0.5V191.6h-0.5V194.2h-0.5V194.7h-0.5V196.1h-0.5V197.2h-0.5V201.1h-0.5V199.6h-0.5V199.0h-0.5V197.7h-0.5V187.9h-0.5V188.2h-0.5V189.0h-0.5V188.1h-0.5V206.1h-0.5V207.5h-0.5V195.9h-0.5V194.0h-0.5V193.5h-0.5V193.8h-0.5V210.7h-0.5V210.7h-0.5V188.3h-0.5V186.9h-0.5V198.2h-0.5V198.6h-0.5V185.3h-0.5V184.7h-0.5V204.7h-0.5V204.8h-0.5V194.5h-0.5V195.8h-0.5V190.1h-0.5V189.7h-0.5V189.0h-0.5V189.3h-0.5V194.5h-0.5V194.5h-0.5V187.3h-0.5V187.5h-0.5V186.5h-0.5V187.2h-0.5V188.6h-0.5V190.1h-0.5V189.3h-0.5V187.3h-0.5V183.7h-0.5V182.9h-0.5V189.5h-0.5V189.5h-0.5V188.3h-0.5V188.4h-0.5V184.4h-0.5V183.4h-0.5V184.7h-0.5V185.3h-0.5V190.9h-0.5V189.5h-0.5V192.9h-0.5V194.6h-0.5V197.4h-0.5V196.2h-0.5V191.0h-0.5V189.3h-0.5V197.5h-0.5V197.1h-0.5V187.6h-0.5V187.2h-0.5V206.7h-0.5V206.6h-0.5V202.5h-0.5V185.3h-0.5V185.0h-0.5V185.9h-0.5V207.8h-0.5V207.6h-0.5V188.9h-0.5V186.8h-0.5V187.5h-0.5V186.5h-0.5V196.7h-0.5V194.2h-0.5V202.9h-0.5V201.4h-0.5V180.4h-0.5V180.1h-0.5V186.9h-0.5V185.5h-0.5V185.8h-0.5V185.7h-0.5V192.5h-0.5V192.8h-0.5V178.5h-0.5V177.5h-0.5V188.0h-0.5V189.1h-0.5V177.7h-0.5V178.1h-0.5V184.6h-0.5V185.3h-0.5V202.6h-0.5V205.9h-0.5V186.5h-0.5V185.8h-0.5V182.0h-0.5V181.8h-0.5V175.6h-0.5V176.6h-0.5V178.8h-0.5V178.0h-0.5V176.4h-0.5V176.1h-0.5V179.6h-0.5V178.2h-0.5V178.7h-0.5V178.8h-0.5V184.1h-0.5V182.0h-0.5V185.1h-0.5V185.9h-0.5V176.7h-0.5V176.0h-0.5V177.8h-0.5V177.1h-0.5V180.6h-0.5V181.2h-0.5V177.7h-0.5V177.7h-0.5V177.1h-0.5V178.2h-0.5V175.5h-0.5V176.5h-0.5V194.0h-0.5V194.0h-0.5V180.4h-0.5V180.9h-0.5V178.2h-0.5V178.6h-0.5V181.9h-0.5V181.8h-0.5V185.3h-0.5V185.2h-0.5V175.4h-0.5V175.4h-0.5V180.9h-0.5V180.0h-0.5V175.6h-0.5V175.8h-0.5V191.2h-0.5V189.3h-0.5V180.9h-0.5V181.2h-0.5V194.8h-0.5V192.9h-0.5V179.9h-0.5V181.3h-0.5V182.1h-0.5V181.3h-0.5V180.3h-0.5V180.0h-0.5V179.6h-0.5V180.5h-0.5V177.9h-0.5V177.7h-0.5V179.4h-0.5V180.8h-0.5V179.1h-0.5V179.5h-0.5V177.3h-0.5V177.6h-0.5V184.4h-0.5V185.8h-0.5V176.8h-0.5V176.7h-0.5V182.8h-0.5V182.4h-0.5V185.9h-0.5V186.3h-0.5V185.6h-0.5V185.5h-0.5V185.6h-0.5V186.7h-0.5V181.4h-0.5V179.7h-0.5V190.1h-0.5V189.1h-0.5V183.5h-0.5V183.6h-0.5V176.8h-0.5V176.4h-0.5V198.1h-0.5V198.1h-0.5V183.2h-0.5V181.4h-0.5V177.1h-0.5V176.9h-0.5V182.7h-0.5V183.9h-0.5V180.2h-0.5V180.6h-0.5V184.2h-0.5V184.8h-0.5V176.4h-0.5V176.4h-0.5V177.5h-0.5V176.5h-0.5V183.7h-0.5V183.7h-0.5V185.6h-0.5V185.4h-0.5V181.5h-0.5V182.2h-0.5V183.4h-0.5V183.3h-0.5V178.6h-0.5V178.7h-0.5V179.6h-0.5V180.7h-0.5V177.2h-0.5V178.1h-0.5V180.8h-0.5V180.6h-0.5V182.5h-0.5V182.5h-0.5V187.3h-0.5V187.7h-0.5V184.2h-0.5V182.6h-0.5V192.5h-0.5V190.7h-0.5V183.3h-0.5V183.6h-0.5V185.6h-0.5V186.9h-0.5V184.2h-0.5V184.0h-0.5V187.6h-0.5V186.9h-0.5V188.7h-0.5V189.3h-0.5V180.8h-0.5V181.5h-0.5V187.1h-0.5V186.2h-0.5V185.9h-0.5V186.6h-0.5V186.4h-0.5V187.0h-0.5V181.1h-0.5V181.8h-0.5V191.5h-0.5V193.8h-0.5V187.8h-0.5V186.9h-0.5V185.4h-0.5V186.7h-0.5V201.5h-0.5V200.4h-0.5V195.3h-0.5V196.2h-0.5V191.1h-0.5V188.5h-0.5V183.4h-0.5V183.0h-0.5V182.6h-0.5V182.9h-0.5V180.2h-0.5V180.2h-0.5V191.6h-0.5V192.2h-0.5V183.0h-0.5V181.5h-0.5V183.3h-0.5V183.5h-0.5V181.1h-0.5V180.9h-0.5V187.8h-0.5V187.5h-0.5V191.2h-0.5V191.3h-0.5V187.2h-0.5V187.2h-0.5V199.6h-0.5V205.2h-0.5V205.2h-0.5V184.9h-0.5V186.0h-0.5V185.2h-0.5V191.2h-0.5V191.3h-0.5V186.3h-0.5V186.4h-0.5V193.7h-0.5V195.8h-0.5V182.8h-0.5V182.7h-0.5V196.4h-0.5V196.6h-0.5V184.5h-0.5V185.3h-0.5V189.4h-0.5V189.0h-0.5V185.7h-0.5V184.7h-0.5V184.4h-0.5V184.6h-0.5V179.3h-0.5V180.5h-0.5V181.0h-0.5V180.8h-0.5V187.9h-0.5V188.7h-0.5V188.5h-0.5V187.9h-0.5V184.0h-0.5V183.0h-0.5V181.5h-0.5V181.6h-0.5V187.2h-0.5V188.6h-0.5V186.6h-0.5V185.6h-0.5V192.5h-0.5V192.5h-0.5V200.1h-0.5V196.7h-0.5V191.9h-0.5V190.2h-0.5V190.9h-0.5V191.9h-0.5V189.2h-0.5V191.1h-0.5V201.4h-0.5V201.4h-0.5V193.2h-0.5V193.1h-0.5V183.9h-0.5V182.9h-0.5V189.7h-0.5V189.8h-0.5V191.0h-0.5V191.0h-0.5V183.1h-0.5V183.8h-0.5V190.7h-0.5V189.2h-0.5V193.4h-0.5V193.9h-0.5V186.8h-0.5V186.2h-0.5V186.1h-0.5V186.6h-0.5V195.5h-0.5V196.0h-0.5V191.3h-0.5V191.6h-0.5V189.9h-0.5V191.2h-0.5V194.3h-0.5V195.1h-0.5V192.9h-0.5V192.0h-0.5V188.0h-0.5V188.8h-0.5V193.2h-0.5V194.4h-0.5V213.8h-0.5V215.9h-0.5V195.2h-0.5V194.7h-0.5V193.7h-0.5V193.9h-0.5V198.5h-0.5V199.9h-0.5V192.2h-0.5V191.9h-0.5V193.5h-0.5V194.6h-0.5V197.0h-0.5V198.1h-0.5V200.9h-0.5V200.4h-0.5V192.6h-0.5V190.7h-0.5V197.7h-0.5V198.4h-0.5V211.8h-0.5V211.8h-0.5V190.2h-0.5V189.3h-0.5V203.8h-0.5V204.3h-0.5V192.3h-0.5V192.1h-0.5V196.9h-0.5V195.3h-0.5V186.5h-0.5V186.7h-0.5V187.4h-0.5V187.5h-0.5V196.4h-0.5V197.2h-0.5V190.7h-0.5V191.6h-0.5V194.2h-0.5V214.5h-0.5V214.5h-0.5V186.7h-0.5V188.8h-0.5V188.7h-0.5V187.6h-0.5V188.0h-0.5V190.0h-0.5V190.1h-0.5V194.0h-0.5V193.7h-0.5V185.2h-0.5V185.3h-0.5V193.8h-0.5V195.4h-0.5V198.4h-0.5V198.7h-0.5V208.6h-0.5V206.6h-0.5V195.4h-0.5V195.2h-0.5V194.6h-0.5V193.3h-0.5V186.9h-0.5V187.7h-0.5V189.0h-0.5V188.8h-0.5V192.6h-0.5V194.0h-0.5V186.2h-0.5V186.4h-0.5V190.1h-0.5V189.6h-0.5V190.0h-0.5V191.0h-0.5V193.6h-0.5V193.2h-0.5V204.4h-0.5V201.5h-0.5V188.8h-0.5V188.9h-0.5V203.8h-0.5V200.6h-0.5V194.4h-0.5V193.9h-0.5V193.1h-0.5V193.2h-0.5V208.8h-0.5V207.2h-0.5V189.5h-0.5V189.6h-0.5V186.2h-0.5V186.2h-0.5V189.8h-0.5V189.1h-0.5V186.0h-0.5V185.9h-0.5V192.7h-0.5V192.2h-0.5V192.2h-0.5V192.2h-0.5V190.8h-0.5V190.7h-0.5V188.6h-0.5V202.5h-0.5V202.5h-0.5V195.0h-0.5V190.9h-0.5V191.0h-0.5V189.9h-0.5V191.3h-0.5V206.3h-0.5V206.1h-0.5V194.1h-0.5V195.3h-0.5V189.9h-0.5V190.8h-0.5V197.3h-0.5V195.5h-0.5V213.1h-0.5V213.9h-0.5V190.3h-0.5V189.7h-0.5V195.3h-0.5V194.9h-0.5V211.8h-0.5V215.1h-0.5V190.8h-0.5V190.4h-0.5V192.5h-0.5V192.4h-0.5V198.4h-0.5V197.6h-0.5V193.2h-0.5V192.9h-0.5V194.3h-0.5V196.5h-0.5V187.4h-0.5V186.3h-0.5V195.9h-0.5V196.4h-0.5V187.3h-0.5V186.9h-0.5V193.1h-0.5V193.8h-0.5V185.6h-0.5V186.0h-0.5V185.8h-0.5V185.0h-0.5V200.4h-0.5V198.8h-0.5V190.0h-0.5V189.9h-0.5V185.0h-0.5V185.0h-0.5V188.4h-0.5V186.4h-0.5V189.6h-0.5V190.3h-0.5V192.6h-0.5V190.6h-0.5V192.8h-0.5V190.3h-0.5V189.8h-0.5V191.5h-0.5V191.5h-0.5V187.5h-0.5V184.9h-0.5V185.3h-0.5V184.1h-0.5V183.8h-0.5V197.0h-0.5V197.9h-0.5V182.9h-0.5V182.4h-0.5V178.3h-0.5V178.2h-0.5V181.5h-0.5V180.5h-0.5V182.2h-0.5V181.7h-0.5V181.6h-0.5V181.1h-0.5V182.2h-0.5V180.4h-0.5V176.8h-0.5V176.0h-0.5V177.3h-0.5V177.2h-0.5V175.5h-0.5V176.3h-0.5V180.1h-0.5V180.8h-0.5V173.8h-0.5V173.0h-0.5V174.5h-0.5V174.7h-0.5V180.1h-0.5V179.0h-0.5V187.7h-0.5V185.4h-0.5V174.9h-0.5V174.1h-0.5V178.2h-0.5V178.9h-0.5V177.1h-0.5V176.4h-0.5V177.4h-0.5V177.4h-0.5V171.6h-0.5V171.2h-0.5V174.2h-0.5V173.8h-0.5V176.1h-0.5V175.3h-0.5V173.6h-0.5V173.7h-0.5V169.5h-0.5V168.8h-0.5V169.3h-0.5V168.7h-0.5V177.4h-0.5V176.5h-0.5V168.3h-0.5V167.5h-0.5V177.4h-0.5V176.9h-0.5V168.6h-0.5V168.2h-0.5V170.2h-0.5V169.1h-0.5V168.4h-0.5V167.6h-0.5V167.5h-0.5V166.8h-0.5V166.5h-0.5V165.7h-0.5V165.4h-0.5V165.1h-0.5V166.9h-0.5V166.3h-0.5V164.5h-0.5V164.7h-0.5V165.5h-0.5V165.3h-0.5V164.3h-0.5V163.3h-0.5V163.6h-0.5V163.1h-0.5V162.1h-0.5V162.1h-0.5V161.1h-0.5V160.9h-0.5V165.6h-0.5V165.9h-0.5V158.3h-0.5V157.8h-0.5V157.6h-0.5V157.0h-0.5V160.3h-0.5V159.5h-0.5V155.9h-0.5V155.1h-0.5V155.4h-0.5V155.0h-0.5V154.4h-0.5V154.2h-0.5V153.7h-0.5V153.5h-0.5V153.2h-0.5V153.1h-0.5V153.3h-0.5V153.3h-0.5V153.1h-0.5V153.0h-0.5Z" fill="#44484c"/>
<path d="M541.0 151.6V151.6h0.5V151.6h0.5V151.3h0.5V151.1h0.5V150.6h0.5V150.4h0.5V150.6h0.5V150.4h0.5V150.2h0.5V150.0h0.5V149.1h0.5V148.9h0.5V148.6h0.5V148.2h0.5V147.2h0.5V146.8h0.5V147.3h0.5V146.8h0.5V144.3h0.5V143.4h0.5V144.9h0.5V144.9h0.5V144.8h0.5V144.1h0.5V144.7h0.5V144.5h0.5V143.6h0.5V143.8h0.5V144.3h0.5V144.0h0.5V142.6h0.5V142.7h0.5V143.2h0.5V143.2h0.5V140.3h0.5V140.2h0.5V140.9h0.5V140.4h0.5V142.4h0.5V142.0h0.5V136.3h0.5V136.3h0.5V141.2h0.5V141.1h0.5V135.6h0.5V134.8h0.5V139.4h0.5V139.6h0.5V138.4h0.5V138.6h0.5V138.1h0.5V137.7h0.5V136.0h0.5V136.3h0.5V137.7h0.5V137.7h0.5V138.2h0.5V137.8h0.5V135.8h0.5V135.8h0.5V136.0h0.5V136.9h0.5V131.1h0.5V131.6h0.5V136.4h0.5V136.4h0.5V133.4h0.5V133.1h0.5V134.9h0.5V134.1h0.5V134.6h0.5V134.0h0.5V132.9h0.5V131.6h0.5V128.8h0.5V129.3h0.5V135.6h0.5V134.8h0.5V134.7h0.5V135.5h0.5V133.9h0.5V134.8h0.5V133.0h0.5V133.2h0.5V128.9h0.5V127.9h0.5V131.6h0.5V132.3h0.5V131.7h0.5V131.2h0.5V128.2h0.5V129.2h0.5V131.9h0.5V131.1h0.5V128.5h0.5V128.6h0.5V127.2h0.5V126.7h0.5V129.2h0.5V128.9h0.5V126.1h0.5V125.9h0.5V129.3h0.5V129.7h0.5V121.0h0.5V119.7h0.5V129.3h0.5V128.4h0.5V124.9h0.5V124.3h0.5V129.7h0.5V129.5h0.5V121.4h0.5V121.0h0.5V128.3h0.5V128.4h0.5V118.1h0.5V119.8h0.5V121.0h0.5V120.1h0.5V124.4h0.5V124.8h0.5V127.5h0.5V125.6h0.5V122.9h0.5V121.8h0.5V128.9h0.5V128.3h0.5V118.2h0.5V118.0h0.5V125.4h0.5V126.2h0.5V121.7h0.5V121.2h0.5V114.0h0.5V114.0h0.5V120.7h0.5V119.5h0.5V126.3h0.5V126.1h0.5V116.0h0.5V115.3h0.5V122.8h0.5V123.8h0.5V120.0h0.5V120.7h0.5V122.6h0.5V124.2h0.5V120.6h0.5V119.3h0.5V122.4h0.5V121.3h0.5V120.8h0.5V121.2h0.5V125.7h0.5V124.0h0.5V124.8h0.5V124.5h0.5V121.2h0.5V121.7h0.5V119.8h0.5V119.2h0.5V119.3h0.5V119.3h0.5V121.3h0.5V121.4h0.5V123.4h0.5V121.7h0.5V121.8h0.5V122.0h0.5V121.2h0.5V121.4h0.5V123.1h0.5V121.7h0.5V114.4h0.5V113.6h0.5V122.1h0.5V122.7h0.5V119.5h0.5V117.3h0.5V119.2h0.5V117.5h0.5V107.3h0.5V107.4h0.5V119.4h0.5V117.4h0.5V118.8h0.5V121.3h0.5V113.8h0.5V113.6h0.5V119.4h0.5V120.9h0.5V113.8h0.5V114.3h0.5V118.4h0.5V115.4h0.5V119.8h0.5V119.9h0.5V120.4h0.5V117.8h0.5V113.9h0.5V112.6h0.5V117.8h0.5V119.4h0.5V113.0h0.5V114.0h0.5V113.4h0.5V113.7h0.5V110.8h0.5V110.7h0.5V105.2h0.5V104.3h0.5V99.8h0.5V101.7h0.5V111.1h0.5V113.3h0.5V113.0h0.5V112.6h0.5V117.3h0.5V114.7h0.5V109.8h0.5V112.0h0.5V116.6h0.5V114.5h0.5V117.2h0.5V118.1h0.5V116.1h0.5V115.6h0.5V105.8h0.5V103.7h0.5V120.9h0.5V120.9h0.5V116.7h0.5V118.8h0.5V121.2h0.5V121.1h0.5V108.9h0.5V109.1h0.5V116.3h0.5V117.1h0.5V116.9h0.5V116.9h0.5V113.2h0.5V113.8h0.5V118.4h0.5V118.3h0.5V108.5h0.5V110.9h0.5V118.5h0.5V117.5h0.5V106.9h0.5V106.8h0.5V118.5h0.5V118.9h0.5V117.3h0.5V117.6h0.5V118.7h0.5V116.8h0.5V117.2h0.5V115.4h0.5V115.4h0.5V115.1h0.5V104.6h0.5V104.4h0.5V107.9h0.5V110.0h0.5V110.7h0.5V113.9h0.5V102.8h0.5V103.9h0.5V116.5h0.5V116.3h0.5V117.0h0.5V117.8h0.5V111.8h0.5V112.4h0.5V116.0h0.5V114.5h0.5V116.9h0.5V116.3h0.5V117.3h0.5V116.8h0.5V115.5h0.5V116.6h0.5V109.4h0.5V107.0h0.5V113.7h0.5V114.6h0.5V108.4h0.5V109.0h0.5V103.7h0.5V104.1h0.5V118.3h0.5V120.3h0.5V113.5h0.5V111.6h0.5V109.4h0.5V109.5h0.5V115.2h0.5V114.6h0.5V114.1h0.5V113.0h0.5V109.8h0.5V108.4h0.5V118.9h0.5V121.1h0.5V107.2h0.5V108.1h0.5V121.2h0.5V120.8h0.5V115.4h0.5V114.8h0.5V121.4h0.5V121.2h0.5V112.0h0.5V110.4h0.5V114.5h0.5V112.5h0.5V111.5h0.5V113.0h0.5V112.9h0.5V113.2h0.5V119.0h0.5V119.4h0.5V116.6h0.5V117.5h0.5V106.4h0.5V104.2h0.5V118.2h0.5V116.7h0.5V118.2h0.5V117.1h0.5V115.4h0.5V117.7h0.5V104.8h0.5V103.6h0.5V113.9h0.5V113.0h0.5V104.2h0.5V101.3h0.5V115.8h0.5V115.5h0.5V103.4h0.5V104.5h0.5V114.2h0.5V113.8h0.5V116.6h0.5V118.2h0.5V116.6h0.5V117.5h0.5V118.9h0.5V118.4h0.5V122.1h0.5V123.1h0.5V116.9h0.5V117.1h0.5V106.4h0.5V108.6h0.5V119.4h0.5V119.2h0.5V122.4h0.5V121.2h0.5V122.2h0.5V120.5h0.5V120.3h0.5V119.4h0.5V118.9h0.5V118.8h0.5V115.4h0.5V114.0h0.5V120.1h0.5V118.6h0.5V117.6h0.5V117.7h0.5V119.4h0.5V121.3h0.5V109.7h0.5V109.8h0.5V120.5h0.5V123.0h0.5V121.4h0.5V124.3h0.5V124.3h0.5V125.2h0.5V124.7h0.5V124.1h0.5V126.6h0.5V125.5h0.5V119.5h0.5V120.8h0.5V121.1h0.5V122.5h0.5V113.8h0.5V115.6h0.5V122.6h0.5V122.6h0.5V128.4h0.5V127.7h0.5V129.0h0.5V128.6h0.5V117.9h0.5V118.1h0.5V129.8h0.5V129.3h0.5V123.2h0.5V123.3h0.5V130.8h0.5V130.1h0.5V126.1h0.5V126.5h0.5V132.0h0.5V130.8h0.5V125.2h0.5V126.8h0.5V131.1h0.5V130.6h0.5V131.6h0.5V130.8h0.5V129.4h0.5V128.9h0.5V132.2h0.5V131.4h0.5V130.3h0.5V131.2h0.5V130.8h0.5V130.0h0.5V123.6h0.5V123.7h0.5V130.6h0.5V131.0h0.5V127.4h0.5V125.6h0.5V129.1h0.5V130.4h0.5V127.2h0.5V127.4h0.5V119.8h0.5V119.5h0.5V125.6h0.5V125.6h0.5V120.2h0.5V120.6h0.5V127.3h0.5V127.9h0.5V128.1h0.5V125.8h0.5V123.4h0.5V123.0h0.5V120.0h0.5V120.7h0.5V124.6h0.5V126.1h0.5V115.1h0.5V116.5h0.5V121.9h0.5V122.3h0.5V124.4h0.5V124.3h0.5V124.4h0.5V125.2h0.5V126.6h0.5V126.2h0.5V119.9h0.5V120.0h0.5V113.2h0.5V115.2h0.5V115.8h0.5V117.2h0.5V121.4h0.5V121.4h0.5V125.5h0.5V123.7h0.5V126.9h0.5V128.4h0.5V127.3h0.5V128.1h0.5V123.3h0.5V122.6h0.5V129.4h0.5V130.6h0.5V131.0h0.5V130.4h0.5V129.9h0.5V128.4h0.5V127.0h0.5V127.1h0.5V126.7h0.5V126.8h0.5V124.6h0.5V124.9h0.5V130.8h0.5V131.1h0.5V125.1h0.5V124.3h0.5V129.7h0.5V129.5h0.5V120.9h0.5V121.9h0.5V131.2h0.5V130.4h0.5V128.2h0.5V126.7h0.5V128.7h0.5V128.4h0.5V130.5h0.5V130.7h0.5V128.4h0.5V126.8h0.5V126.0h0.5V126.2h0.5V130.0h0.5V128.3h0.5V123.3h0.5V121.6h0.5V126.4h0.5V125.6h0.5V121.7h0.5V121.6h0.5V127.6h0.5V129.5h0.5V125.5h0.5V127.3h0.5V119.8h0.5V119.5h0.5V121.9h0.5V120.7h0.5V119.1h0.5V118.5h0.5V126.5h0.5V125.2h0.5V122.8h0.5V120.2h0.5V123.4h0.5V121.8h0.5V127.5h0.5V127.4h0.5V117.0h0.5V118.0h0.5V120.0h0.5V119.9h0.5V124.8h0.5V123.2h0.5V117.2h0.5V118.2h0.5V122.6h0.5V121.9h0.5V120.6h0.5V121.6h0.5V120.2h0.5V120.0h0.5V115.8h0.5V115.0h0.5V120.5h0.5V120.4h0.5V108.5h0.5V106.2h0.5V115.4h0.5V115.8h0.5V122.4h0.5V120.4h0.5V121.5h0.5V120.9h0.5V117.0h0.5V117.2h0.5V121.2h0.5V123.1h0.5V115.2h0.5V115.5h0.5V117.8h0.5V117.8h0.5V122.3h0.5V120.3h0.5V108.9h0.5V110.0h0.5V122.6h0.5V123.0h0.5V122.6h0.5V120.9h0.5V116.2h0.5V114.2h0.5V123.4h0.5V123.7h0.5V118.0h0.5V116.2h0.5V121.2h0.5V121.1h0.5V121.4h0.5V122.4h0.5V117.7h0.5V117.5h0.5V110.5h0.5V109.1h0.5V114.8h0.5V114.5h0.5V112.2h0.5V111.6h0.5V117.4h0.5V119.1h0.5V119.5h0.5V119.1h0.5V110.7h0.5V111.9h0.5V106.0h0.5V106.3h0.5V118.5h0.5V119.0h0.5V112.2h0.5V113.5h0.5V120.0h0.5V120.4h0.5V105.0h0.5V104.6h0.5V117.2h0.5V116.6h0.5V118.1h0.5V118.5h0.5V115.8h0.5V115.8h0.5V113.6h0.5V116.0h0.5V111.6h0.5V109.0h0.5V114.8h0.5V114.3h0.5V111.7h0.5V112.9h0.5V109.0h0.5V108.4h0.5V109.5h0.5V111.7h0.5V100.6h0.5V101.8h0.5V97.5h0.5V98.5h0.5V101.7h0.5V102.7h0.5V107.0h0.5V107.5h0.5V114.2h0.5V115.0h0.5V111.5h0.5V114.1h0.5V107.0h0.5V109.1h0.5V96.9h0.5V99.4h0.5V111.1h0.5V113.5h0.5V104.0h0.5V102.7h0.5V111.9h0.5V114.6h0.5V111.7h0.5V110.5h0.5V114.3h0.5V114.4h0.5V113.0h0.5V114.5h0.5V107.7h0.5V105.4h0.5V102.7h0.5V104.8h0.5V113.1h0.5V111.8h0.5V110.7h0.5V109.8h0.5V111.4h0.5V112.0h0.5V99.2h0.5V99.1h0.5V106.8h0.5V105.6h0.5V115.3h0.5V115.1h0.5V110.7h0.5V113.1h0.5V99.3h0.5V97.1h0.5V114.4h0.5V114.7h0.5V115.0h0.5V115.0h0.5V115.0h0.5V114.1h0.5V100.2h0.5V101.0h0.5V100.3h0.5V101.0h0.5V108.5h0.5V107.6h0.5V98.2h0.5V98.9h0.5V113.3h0.5V114.0h0.5V110.3h0.5V108.2h0.5V101.9h0.5V101.3h0.5V114.5h0.5V114.3h0.5V114.8h0.5V113.7h0.5V108.1h0.5V107.6h0.5V117.2h0.5V117.6h0.5V116.3h0.5V119.2h0.5V115.9h0.5V115.8h0.5V106.5h0.5V104.5h0.5V118.1h0.5V120.1h0.5V118.6h0.5V118.6h0.5V120.6h0.5V120.2h0.5V120.3h0.5V119.3h0.5V120.4h0.5V119.8h0.5V112.8h0.5V112.8h0.5V118.9h0.5V119.5h0.5V118.4h0.5V117.9h0.5V106.0h0.5V104.5h0.5V115.3h0.5V115.7h0.5V114.5h0.5V113.7h0.5V109.0h0.5V107.9h0.5V121.5h0.5V119.9h0.5V119.8h0.5V119.5h0.5V120.4h0.5V119.8h0.5V122.4h0.5V122.0h0.5V119.6h0.5V118.9h0.5V122.3h0.5V121.8h0.5V120.2h0.5V120.7h0.5V124.2h0.5V122.3h0.5V115.2h0.5V114.5h0.5V125.1h0.5V124.3h0.5V123.7h0.5V124.0h0.5V123.1h0.5V124.4h0.5V122.6h0.5V123.1h0.5V123.1h0.5V123.9h0.5V126.0h0.5V126.0h0.5V127.6h0.5V128.0h0.5V118.6h0.5V120.3h0.5V116.8h0.5V119.1h0.5V123.3h0.5V122.8h0.5V128.6h0.5V129.5h0.5V128.9h0.5V127.9h0.5V127.0h0.5V125.7h0.5V130.0h0.5V129.4h0.5V128.8h0.5V129.5h0.5V125.5h0.5V126.2h0.5V121.3h0.5V122.9h0.5V130.0h0.5V130.1h0.5V132.2h0.5V131.5h0.5V129.6h0.5V131.2h0.5V130.9h0.5V131.1h0.5V127.7h0.5V128.6h0.5V127.5h0.5V129.3h0.5V130.8h0.5V132.0h0.5V132.3h0.5V131.1h0.5V131.9h0.5V131.5h0.5V132.2h0.5V131.0h0.5V132.0h0.5V132.2h0.5V132.6h0.5V133.1h0.5V135.1h0.5V135.4h0.5V135.1h0.5V135.6h0.5V130.5h0.5V130.0h0.5V136.3h0.5V136.6h0.5V130.3h0.5V131.1h0.5V130.2h0.5V130.4h0.5V137.3h0.5V136.6h0.5V137.0h0.5V137.5h0.5V136.0h0.5V136.3h0.5V136.1h0.5V136.7h0.5V134.5h0.5V134.7h0.5V132.8h0.5V133.6h0.5V138.3h0.5V139.5h0.5V137.4h0.5V138.4h0.5V133.0h0.5V133.7h0.5V137.6h0.5V137.8h0.5V137.5h0.5V137.7h0.5V139.2h0.5V139.5h0.5V138.3h0.5V137.9h0.5V137.6h0.5V137.6h0.5V140.7h0.5V140.9h0.5V142.0h0.5V142.2h0.5V142.0h0.5V142.6h0.5V142.0h0.5V142.2h0.5V141.5h0.5V142.1h0.5V142.6h0.5V143.2h0.5V143.1h0.5V142.6h0.5V141.6h0.5V141.7h0.5V140.3h0.5V140.3h0.5V140.5h0.5V139.8h0.5V140.6h0.5V141.1h0.5V141.0h0.5V140.8h0.5V139.5h0.5V139.0h0.5V142.0h0.5V142.7h0.5V140.2h0.5V140.1h0.5V140.9h0.5V141.2h0.5V142.8h0.5V143.0h0.5V144.5h0.5V144.3h0.5V144.6h0.5V144.7h0.5V144.2h0.5V143.8h0.5V144.3h0.5V144.2h0.5V142.7h0.5V143.1h0.5V144.4h0.5V144.5h0.5V145.8h0.5V145.5h0.5V144.5h0.5V144.6h0.5V144.4h0.5V144.6h0.5V144.5h0.5V144.7h0.5V146.0h0.5V146.1h0.5V144.7h0.5V144.8h0.5V145.3h0.5V145.3h0.5V145.6h0.5V145.6h0.5V145.8h0.5V146.1h0.5V144.0h0.5V143.8h0.5V144.5h0.5V144.3h0.5V144.5h0.5V144.5h0.5V146.1h0.5V145.9h0.5V145.0h0.5V145.3h0.5V146.0h0.5V146.0h0.5V145.4h0.5V145.6h0.5V143.8h0.5V143.6h0.5V145.7h0.5V145.6h0.5V146.5h0.5V146.6h0.5V145.9h0.5V146.1h0.5V144.5h0.5V144.5h0.5V145.9h0.5V146.1h0.5V144.7h0.5V145.2h0.5V147.1h0.5V147.1h0.5V145.7h0.5V146.0h0.5V145.8h0.5V145.9h0.5V147.7h0.5V147.7h0.5V145.5h0.5V145.5h0.5V147.4h0.5V147.4h0.5V146.9h0.5V146.9h0.5V147.1h0.5V146.8h0.5V145.9h0.5V145.9h0.5V146.8h0.5V146.7h0.5V145.2h0.5V145.4h0.5V145.7h0.5V145.4h0.5V144.8h0.5V144.7h0.5V143.4h0.5V143.2h0.5V143.2h0.5V142.9h0.5V143.8h0.5V143.5h0.5V143.9h0.5V143.7h0.5V145.3h0.5V145.0h0.5V145.4h0.5V145.4h0.5V144.7h0.5V144.6h0.5V145.2h0.5V144.8h0.5V144.9h0.5V144.6h0.5V142.4h0.5V142.2h0.5V144.4h0.5V144.2h0.5V144.0h0.5V143.5h0.5V140.2h0.5V139.7h0.5V138.8h0.5V138.9h0.5V141.9h0.5V141.6h0.5V142.2h0.5V141.9h0.5V140.9h0.5V140.5h0.5V137.5h0.5V137.4h0.5V141.3h0.5V140.4h0.5V140.0h0.5V139.8h0.5V141.0h0.5V140.1h0.5V141.0h0.5V140.5h0.5V137.2h0.5V136.8h0.5V140.5h0.5V139.7h0.5V136.2h0.5V136.2h0.5V139.9h0.5V139.5h0.5V133.8h0.5V134.2h0.5V136.4h0.5V136.1h0.5V137.5h0.5V138.1h0.5V133.7h0.5V134.8h0.5V136.6h0.5V137.2h0.5V135.1h0.5V136.0h0.5V131.4h0.5V131.1h0.5V134.8h0.5V135.3h0.5V137.8h0.5V137.6h0.5V133.7h0.5V132.8h0.5V135.4h0.5V135.3h0.5V136.3h0.5V135.1h0.5V135.6h0.5V135.6h0.5V131.4h0.5V131.2h0.5V133.2h0.5V132.6h0.5V134.2h0.5V134.3h0.5V132.3h0.5V132.2h0.5V133.6h0.5V132.8h0.5V132.2h0.5V132.2h0.5V131.8h0.5V131.6h0.5V131.1h0.5V130.4h0.5V124.4h0.5V124.6h0.5V129.4h0.5V129.4h0.5V132.0h0.5V131.7h0.5V130.8h0.5V131.0h0.5V122.8h0.5V123.2h0.5V121.2h0.5V121.9h0.5V131.7h0.5V130.9h0.5V128.6h0.5V127.3h0.5V120.6h0.5V119.4h0.5V127.6h0.5V126.0h0.5V129.5h0.5V129.0h0.5V123.4h0.5V122.6h0.5V117.3h0.5V116.7h0.5V124.6h0.5V123.8h0.5V125.1h0.5V125.0h0.5V119.9h0.5V118.9h0.5V124.4h0.5V124.8h0.5V122.2h0.5V124.1h0.5V123.3h0.5V123.6h0.5V116.6h0.5V117.0h0.5V117.3h0.5V115.8h0.5V125.0h0.5V125.7h0.5V124.3h0.5V124.7h0.5V118.4h0.5V118.5h0.5V124.8h0.5V124.2h0.5V124.7h0.5V125.4h0.5V123.8h0.5V124.6h0.5V120.7h0.5V120.6h0.5V123.1h0.5V124.1h0.5V118.3h0.5V116.9h0.5V113.4h0.5V114.0h0.5V123.5h0.5V122.1h0.5V119.7h0.5V122.1h0.5V117.1h0.5V117.5h0.5V111.6h0.5V113.7h0.5V119.5h0.5V119.3h0.5V124.8h0.5V123.1h0.5V122.2h0.5V122.3h0.5V123.0h0.5V123.0h0.5V114.8h0.5V115.1h0.5V119.0h0.5V118.1h0.5V115.2h0.5V115.9h0.5V114.4h0.5V114.6h0.5V122.6h0.5V123.1h0.5V110.0h0.5V109.8h0.5V114.3h0.5V116.4h0.5V113.9h0.5V113.6h0.5V119.6h0.5V118.7h0.5V113.1h0.5V113.7h0.5V117.7h0.5V116.2h0.5V115.1h0.5V114.0h0.5V121.6h0.5V119.9h0.5V118.6h0.5V118.1h0.5V117.8h0.5V119.5h0.5V118.7h0.5V119.2h0.5V119.8h0.5V119.1h0.5V107.9h0.5V106.1h0.5V119.9h0.5V120.8h0.5V115.4h0.5V115.1h0.5V104.8h0.5V104.2h0.5V116.9h0.5V116.7h0.5V120.7h0.5V119.9h0.5V117.2h0.5V117.2h0.5V122.0h0.5V119.8h0.5V111.8h0.5V111.5h0.5V119.5h0.5V120.7h0.5V119.3h0.5V117.9h0.5V107.2h0.5V108.0h0.5V113.7h0.5V115.1h0.5V113.3h0.5V114.6h0.5V111.3h0.5V110.2h0.5V124.3h0.5V124.1h0.5V113.0h0.5V111.6h0.5V122.2h0.5V123.2h0.5V121.7h0.5V122.0h0.5V118.4h0.5V116.9h0.5V121.5h0.5V121.6h0.5V119.2h0.5V120.8h0.5V123.1h0.5V122.9h0.5V107.4h0.5V107.6h0.5V115.8h0.5V116.6h0.5V108.8h0.5V108.2h0.5V114.3h0.5V113.0h0.5V117.7h0.5V118.2h0.5V115.6h0.5V116.3h0.5V124.5h0.5V124.3h0.5V120.6h0.5V122.2h0.5V123.0h0.5V124.2h0.5V123.6h0.5V122.4h0.5V120.9h0.5V120.3h0.5V125.5h0.5V123.9h0.5V119.7h0.5V119.5h0.5V120.4h0.5V117.6h0.5V116.7h0.5V118.4h0.5V119.8h0.5V119.9h0.5V121.7h0.5V122.2h0.5V114.4h0.5V112.5h0.5V120.4h0.5V120.8h0.5V114.2h0.5V114.7h0.5V151.6V181.4h-0.5V180.9h-0.5V175.3h-0.5V175.7h-0.5V175.4h-0.5V174.0h-0.5V176.3h-0.5V175.7h-0.5V174.4h-0.5V174.8h-0.5V176.9h-0.5V175.1h-0.5V181.9h-0.5V181.8h-0.5V177.3h-0.5V178.2h-0.5V175.6h-0.5V176.5h-0.5V179.2h-0.5V178.7h-0.5V185.1h-0.5V185.8h-0.5V180.2h-0.5V179.4h-0.5V176.2h-0.5V177.0h-0.5V184.6h-0.5V184.0h-0.5V175.3h-0.5V176.3h-0.5V181.0h-0.5V181.4h-0.5V184.5h-0.5V184.7h-0.5V178.9h-0.5V178.7h-0.5V176.8h-0.5V176.1h-0.5V188.6h-0.5V189.1h-0.5V176.2h-0.5V175.3h-0.5V177.8h-0.5V176.2h-0.5V181.5h-0.5V181.0h-0.5V178.9h-0.5V178.8h-0.5V177.4h-0.5V177.8h-0.5V180.1h-0.5V179.8h-0.5V181.4h-0.5V182.7h-0.5V176.8h-0.5V175.3h-0.5V178.6h-0.5V177.8h-0.5V187.3h-0.5V186.3h-0.5V179.0h-0.5V179.4h-0.5V185.1h-0.5V185.3h-0.5V178.9h-0.5V178.3h-0.5V176.7h-0.5V175.7h-0.5V177.1h-0.5V176.4h-0.5V185.1h-0.5V185.7h-0.5V184.5h-0.5V186.6h-0.5V183.7h-0.5V182.5h-0.5V175.8h-0.5V176.3h-0.5V190.1h-0.5V188.4h-0.5V186.4h-0.5V186.3h-0.5V186.1h-0.5V184.2h-0.5V178.2h-0.5V178.0h-0.5V182.5h-0.5V180.3h-0.5V179.6h-0.5V178.8h-0.5V190.9h-0.5V190.4h-0.5V176.4h-0.5V176.7h-0.5V186.9h-0.5V187.6h-0.5V186.4h-0.5V186.2h-0.5V183.1h-0.5V182.5h-0.5V184.7h-0.5V183.1h-0.5V176.3h-0.5V174.8h-0.5V181.0h-0.5V180.0h-0.5V177.4h-0.5V177.7h-0.5V180.9h-0.5V180.1h-0.5V176.7h-0.5V176.7h-0.5V179.3h-0.5V180.8h-0.5V174.1h-0.5V172.9h-0.5V184.5h-0.5V184.8h-0.5V179.5h-0.5V178.8h-0.5V174.4h-0.5V174.4h-0.5V183.5h-0.5V183.8h-0.5V175.2h-0.5V174.0h-0.5V181.2h-0.5V181.9h-0.5V185.9h-0.5V187.1h-0.5V175.0h-0.5V175.6h-0.5V176.9h-0.5V177.2h-0.5V184.7h-0.5V186.3h-0.5V181.7h-0.5V182.9h-0.5V174.7h-0.5V176.1h-0.5V177.3h-0.5V178.1h-0.5V176.5h-0.5V177.9h-0.5V183.2h-0.5V183.2h-0.5V177.7h-0.5V176.2h-0.5V176.9h-0.5V178.7h-0.5V178.2h-0.5V178.0h-0.5V173.4h-0.5V172.9h-0.5V175.8h-0.5V174.9h-0.5V182.9h-0.5V182.8h-0.5V177.0h-0.5V176.1h-0.5V173.4h-0.5V172.8h-0.5V172.4h-0.5V172.1h-0.5V176.8h-0.5V177.4h-0.5V178.6h-0.5V179.1h-0.5V177.5h-0.5V176.3h-0.5V171.7h-0.5V171.4h-0.5V173.3h-0.5V172.3h-0.5V174.6h-0.5V175.7h-0.5V179.7h-0.5V179.5h-0.5V172.0h-0.5V170.0h-0.5V172.6h-0.5V171.5h-0.5V176.7h-0.5V176.7h-0.5V176.8h-0.5V177.5h-0.5V176.1h-0.5V176.7h-0.5V170.9h-0.5V170.4h-0.5V169.4h-0.5V169.7h-0.5V170.9h-0.5V169.9h-0.5V169.9h-0.5V169.4h-0.5V169.1h-0.5V168.1h-0.5V169.2h-0.5V169.2h-0.5V174.6h-0.5V173.2h-0.5V172.6h-0.5V172.2h-0.5V171.4h-0.5V171.8h-0.5V167.9h-0.5V167.0h-0.5V169.8h-0.5V169.5h-0.5V166.9h-0.5V167.1h-0.5V165.9h-0.5V165.6h-0.5V164.9h-0.5V165.2h-0.5V168.5h-0.5V168.4h-0.5V166.3h-0.5V166.3h-0.5V168.9h-0.5V168.1h-0.5V163.4h-0.5V163.3h-0.5V162.8h-0.5V162.6h-0.5V165.6h-0.5V165.4h-0.5V167.3h-0.5V167.0h-0.5V164.8h-0.5V164.0h-0.5V163.4h-0.5V162.6h-0.5V162.6h-0.5V162.4h-0.5V161.9h-0.5V161.5h-0.5V162.0h-0.5V161.8h-0.5V161.1h-0.5V160.2h-0.5V160.3h-0.5V160.5h-0.5V160.0h-0.5V159.9h-0.5V160.2h-0.5V160.0h-0.5V159.8h-0.5V160.0h-0.5V159.6h-0.5V159.3h-0.5V159.5h-0.5V159.7h-0.5V161.2h-0.5V161.0h-0.5V158.8h-0.5V158.2h-0.5V160.8h-0.5V160.5h-0.5V159.7h-0.5V159.4h-0.5V157.8h-0.5V157.3h-0.5V160.2h-0.5V159.9h-0.5V159.4h-0.5V159.4h-0.5V157.5h-0.5V157.5h-0.5V156.8h-0.5V156.7h-0.5V156.3h-0.5V156.6h-0.5V156.4h-0.5V156.7h-0.5V156.6h-0.5V156.2h-0.5V156.0h-0.5V156.1h-0.5V157.0h-0.5V156.9h-0.5V156.8h-0.5V156.8h-0.5V156.8h-0.5V157.0h-0.5V157.2h-0.5V157.0h-0.5V156.0h-0.5V156.0h-0.5V156.1h-0.5V156.4h-0.5V157.0h-0.5V157.3h-0.5V155.7h-0.5V155.7h-0.5V155.8h-0.5V156.1h-0.5V156.5h-0.5V156.6h-0.5V156.6h-0.5V156.2h-0.5V156.4h-0.5V156.8h-0.5V156.5h-0.5V156.7h-0.5V157.0h-0.5V157.0h-0.5V155.5h-0.5V155.9h-0.5V155.7h-0.5V155.9h-0.5V155.5h-0.5V155.6h-0.5V157.8h-0.5V157.9h-0.5V156.7h-0.5V156.6h-0.5V155.9h-0.5V156.1h-0.5V157.5h-0.5V157.1h-0.5V155.8h-0.5V156.0h-0.5V156.2h-0.5V156.5h-0.5V156.1h-0.5V156.1h-0.5V156.4h-0.5V156.0h-0.5V156.9h-0.5V156.9h-0.5V157.6h-0.5V157.5h-0.5V156.7h-0.5V156.6h-0.5V157.5h-0.5V157.4h-0.5V158.0h-0.5V158.1h-0.5V158.0h-0.5V157.9h-0.5V157.8h-0.5V157.7h-0.5V157.2h-0.5V157.6h-0.5V156.0h-0.5V156.2h-0.5V156.1h-0.5V156.3h-0.5V156.0h-0.5V156.3h-0.5V156.2h-0.5V156.3h-0.5V158.8h-0.5V158.9h-0.5V158.6h-0.5V158.6h-0.5V156.9h-0.5V156.9h-0.5V157.1h-0.5V157.0h-0.5V156.9h-0.5V157.2h-0.5V158.8h-0.5V158.9h-0.5V159.5h-0.5V159.6h-0.5V157.3h-0.5V157.6h-0.5V160.2h-0.5V160.2h-0.5V159.8h-0.5V159.6h-0.5V157.2h-0.5V157.2h-0.5V158.1h-0.5V158.2h-0.5V159.8h-0.5V159.7h-0.5V158.5h-0.5V158.5h-0.5V158.8h-0.5V158.9h-0.5V160.1h-0.5V160.2h-0.5V157.8h-0.5V158.1h-0.5V159.5h-0.5V159.7h-0.5V159.2h-0.5V159.2h-0.5V159.2h-0.5V159.4h-0.5V161.1h-0.5V161.7h-0.5V160.0h-0.5V160.5h-0.5V161.7h-0.5V161.6h-0.5V158.7h-0.5V159.2h-0.5V161.5h-0.5V161.7h-0.5V161.8h-0.5V161.9h-0.5V159.3h-0.5V159.9h-0.5V159.5h-0.5V159.8h-0.5V159.4h-0.5V160.3h-0.5V160.5h-0.5V161.1h-0.5V160.8h-0.5V160.9h-0.5V161.5h-0.5V161.6h-0.5V163.8h-0.5V164.0h-0.5V163.3h-0.5V163.2h-0.5V166.9h-0.5V167.4h-0.5V167.0h-0.5V168.1h-0.5V163.0h-0.5V163.2h-0.5V162.8h-0.5V163.7h-0.5V166.5h-0.5V166.9h-0.5V163.3h-0.5V164.2h-0.5V163.8h-0.5V164.4h-0.5V164.8h-0.5V164.7h-0.5V168.8h-0.5V168.8h-0.5V170.0h-0.5V170.7h-0.5V168.9h-0.5V168.0h-0.5V164.8h-0.5V164.9h-0.5V166.1h-0.5V166.5h-0.5V167.8h-0.5V167.3h-0.5V168.5h-0.5V168.4h-0.5V166.2h-0.5V166.2h-0.5V165.3h-0.5V165.4h-0.5V166.8h-0.5V167.5h-0.5V166.2h-0.5V165.5h-0.5V165.4h-0.5V166.0h-0.5V172.3h-0.5V171.7h-0.5V172.7h-0.5V172.7h-0.5V170.0h-0.5V170.8h-0.5V174.4h-0.5V174.9h-0.5V172.5h-0.5V172.5h-0.5V166.5h-0.5V168.0h-0.5V167.5h-0.5V168.8h-0.5V170.3h-0.5V170.1h-0.5V170.3h-0.5V169.9h-0.5V177.3h-0.5V176.7h-0.5V170.3h-0.5V171.6h-0.5V170.9h-0.5V170.6h-0.5V169.7h-0.5V169.7h-0.5V168.5h-0.5V168.5h-0.5V177.6h-0.5V176.7h-0.5V170.5h-0.5V170.8h-0.5V172.4h-0.5V172.7h-0.5V174.1h-0.5V174.6h-0.5V170.9h-0.5V171.9h-0.5V174.2h-0.5V174.0h-0.5V173.1h-0.5V173.3h-0.5V173.2h-0.5V174.8h-0.5V181.1h-0.5V181.7h-0.5V174.1h-0.5V175.0h-0.5V177.0h-0.5V177.9h-0.5V179.1h-0.5V179.2h-0.5V183.1h-0.5V181.8h-0.5V182.8h-0.5V182.3h-0.5V181.4h-0.5V182.8h-0.5V186.3h-0.5V186.5h-0.5V186.0h-0.5V186.4h-0.5V178.1h-0.5V176.4h-0.5V175.3h-0.5V176.8h-0.5V184.0h-0.5V182.0h-0.5V176.4h-0.5V177.3h-0.5V181.1h-0.5V182.4h-0.5V177.0h-0.5V177.3h-0.5V176.2h-0.5V176.0h-0.5V179.5h-0.5V180.9h-0.5V183.9h-0.5V182.9h-0.5V184.4h-0.5V185.1h-0.5V177.0h-0.5V179.1h-0.5V177.8h-0.5V177.1h-0.5V175.8h-0.5V176.6h-0.5V186.5h-0.5V187.3h-0.5V177.1h-0.5V177.7h-0.5V177.6h-0.5V177.6h-0.5V179.9h-0.5V178.6h-0.5V184.0h-0.5V182.8h-0.5V177.3h-0.5V178.1h-0.5V186.9h-0.5V187.0h-0.5V179.7h-0.5V180.3h-0.5V180.9h-0.5V181.5h-0.5V180.0h-0.5V181.2h-0.5V179.7h-0.5V178.3h-0.5V179.7h-0.5V181.4h-0.5V183.1h-0.5V182.5h-0.5V180.7h-0.5V181.0h-0.5V185.0h-0.5V183.7h-0.5V175.7h-0.5V177.1h-0.5V177.9h-0.5V178.6h-0.5V176.3h-0.5V177.7h-0.5V187.5h-0.5V188.3h-0.5V180.3h-0.5V180.1h-0.5V176.6h-0.5V176.8h-0.5V175.9h-0.5V174.3h-0.5V178.0h-0.5V177.1h-0.5V184.7h-0.5V183.0h-0.5V177.2h-0.5V177.0h-0.5V185.1h-0.5V184.1h-0.5V174.0h-0.5V175.6h-0.5V186.7h-0.5V186.5h-0.5V175.0h-0.5V176.3h-0.5V176.0h-0.5V178.2h-0.5V177.7h-0.5V178.1h-0.5V186.2h-0.5V185.9h-0.5V187.3h-0.5V188.8h-0.5V183.9h-0.5V182.9h-0.5V176.8h-0.5V177.0h-0.5V176.7h-0.5V177.7h-0.5V178.0h-0.5V177.3h-0.5V183.8h-0.5V184.5h-0.5V176.1h-0.5V175.6h-0.5V175.2h-0.5V175.4h-0.5V179.5h-0.5V180.1h-0.5V175.8h-0.5V175.0h-0.5V176.8h-0.5V175.6h-0.5V173.8h-0.5V175.5h-0.5V179.4h-0.5V178.8h-0.5V174.1h-0.5V173.4h-0.5V183.8h-0.5V183.3h-0.5V176.9h-0.5V176.7h-0.5V178.9h-0.5V178.9h-0.5V183.7h-0.5V183.3h-0.5V178.8h-0.5V178.4h-0.5V179.5h-0.5V178.9h-0.5V171.7h-0.5V172.7h-0.5V180.4h-0.5V180.0h-0.5V174.1h-0.5V174.0h-0.5V175.1h-0.5V174.7h-0.5V174.2h-0.5V173.1h-0.5V180.9h-0.5V179.4h-0.5V171.5h-0.5V170.4h-0.5V175.6h-0.5V175.9h-0.5V179.1h-0.5V179.7h-0.5V176.5h-0.5V175.4h-0.5V173.7h-0.5V173.7h-0.5V170.7h-0.5V171.7h-0.5V171.2h-0.5V171.3h-0.5V173.2h-0.5V173.1h-0.5V171.2h-0.5V171.1h-0.5V173.7h-0.5V172.6h-0.5V171.6h-0.5V171.1h-0.5V170.1h-0.5V171.6h-0.5V175.7h-0.5V175.0h-0.5V176.1h-0.5V175.0h-0.5V169.6h-0.5V169.3h-0.5V169.8h-0.5V169.5h-0.5V169.1h-0.5V169.5h-0.5V176.7h-0.5V176.6h-0.5V168.3h-0.5V168.0h-0.5V167.1h-0.5V167.3h-0.5V169.0h-0.5V169.9h-0.5V168.3h-0.5V168.4h-0.5V167.8h-0.5V167.7h-0.5V166.5h-0.5V166.2h-0.5V166.7h-0.5V166.8h-0.5V167.0h-0.5V167.6h-0.5V171.5h-0.5V171.2h-0.5V171.2h-0.5V170.7h-0.5V168.5h-0.5V168.9h-0.5V168.9h-0.5V169.5h-0.5V167.1h-0.5V167.1h-0.5V169.0h-0.5V168.7h-0.5V169.3h-0.5V169.3h-0.5V172.3h-0.5V172.1h-0.5V170.1h-0.5V169.9h-0.5V170.0h-0.5V169.6h-0.5V166.1h-0.5V165.3h-0.5V166.7h-0.5V167.0h-0.5V166.5h-0.5V166.6h-0.5V170.3h-0.5V170.7h-0.5V169.5h-0.5V169.6h-0.5V166.1h-0.5V165.5h-0.5V172.1h-0.5V172.8h-0.5V165.9h-0.5V165.4h-0.5V167.9h-0.5V168.3h-0.5V166.7h-0.5V166.3h-0.5V170.2h-0.5V170.2h-0.5V171.7h-0.5V170.4h-0.5V166.9h-0.5V165.6h-0.5V170.0h-0.5V169.9h-0.5V166.7h-0.5V165.5h-0.5V172.2h-0.5V172.2h-0.5V169.5h-0.5V169.9h-0.5V165.8h-0.5V165.3h-0.5V171.3h-0.5V171.1h-0.5V170.1h-0.5V169.8h-0.5V167.8h-0.5V167.5h-0.5V170.7h-0.5V170.1h-0.5V165.6h-0.5V165.7h-0.5V165.5h-0.5V165.0h-0.5V165.3h-0.5V165.4h-0.5V166.9h-0.5V166.2h-0.5V171.3h-0.5V171.6h-0.5V171.6h-0.5V170.9h-0.5V166.6h-0.5V166.8h-0.5V166.3h-0.5V167.1h-0.5V167.2h-0.5V166.8h-0.5V166.6h-0.5V166.2h-0.5V167.4h-0.5V167.5h-0.5V166.0h-0.5V165.9h-0.5V171.6h-0.5V171.9h-0.5V170.1h-0.5V170.5h-0.5V173.2h-0.5V172.9h-0.5V170.9h-0.5V170.9h-0.5V170.6h-0.5V171.3h-0.5V167.4h-0.5V166.2h-0.5V169.6h-0.5V169.4h-0.5V166.8h-0.5V165.8h-0.5V166.6h-0.5V165.8h-0.5V168.0h-0.5V167.4h-0.5V166.8h-0.5V166.0h-0.5V167.1h-0.5V166.7h-0.5V166.0h-0.5V166.9h-0.5V172.7h-0.5V173.1h-0.5V173.9h-0.5V173.1h-0.5V169.8h-0.5V169.9h-0.5V172.6h-0.5V172.9h-0.5V168.5h-0.5V169.0h-0.5V169.0h-0.5V168.8h-0.5V167.4h-0.5V167.2h-0.5V168.5h-0.5V168.0h-0.5V169.7h-0.5V170.2h-0.5V171.8h-0.5V172.3h-0.5V170.0h-0.5V169.6h-0.5V176.7h-0.5V176.5h-0.5V171.2h-0.5V171.3h-0.5V169.1h-0.5V168.2h-0.5V172.3h-0.5V172.9h-0.5V169.6h-0.5V169.1h-0.5V176.7h-0.5V175.7h-0.5V172.8h-0.5V172.4h-0.5V169.1h-0.5V168.3h-0.5V170.3h-0.5V170.7h-0.5V170.4h-0.5V170.0h-0.5V169.0h-0.5V169.0h-0.5V173.1h-0.5V172.9h-0.5V170.7h-0.5V171.4h-0.5V172.8h-0.5V173.5h-0.5V176.0h-0.5V176.0h-0.5V168.8h-0.5V169.6h-0.5V169.0h-0.5V169.1h-0.5V169.9h-0.5V169.9h-0.5V168.8h-0.5V169.1h-0.5V173.8h-0.5V173.0h-0.5V172.4h-0.5V173.0h-0.5V168.8h-0.5V168.8h-0.5V171.4h-0.5V171.4h-0.5V171.1h-0.5V171.8h-0.5V169.9h-0.5V170.1h-0.5V169.8h-0.5V169.8h-0.5V169.2h-0.5V170.7h-0.5V170.8h-0.5V169.6h-0.5V169.5h-0.5V170.1h-0.5V171.6h-0.5V170.2h-0.5V170.0h-0.5V169.7h-0.5V170.7h-0.5V169.7h-0.5V170.4h-0.5V170.8h-0.5V168.9h-0.5V169.0h-0.5V167.7h-0.5V168.6h-0.5V172.5h-0.5V173.5h-0.5V169.1h-0.5V170.5h-0.5V172.1h-0.5V171.5h-0.5V169.6h-0.5V169.0h-0.5V170.8h-0.5V171.2h-0.5V178.1h-0.5V177.9h-0.5V174.4h-0.5V175.1h-0.5V172.7h-0.5V173.3h-0.5V179.2h-0.5V179.5h-0.5V172.3h-0.5V172.0h-0.5V171.1h-0.5V171.2h-0.5V171.6h-0.5V170.7h-0.5V170.4h-0.5V170.9h-0.5V171.6h-0.5V172.6h-0.5V171.9h-0.5V172.3h-0.5V170.6h-0.5V172.4h-0.5V171.8h-0.5V172.0h-0.5V174.9h-0.5V175.9h-0.5V172.2h-0.5V172.1h-0.5V171.6h-0.5V171.0h-0.5V179.4h-0.5V179.8h-0.5V171.7h-0.5V171.9h-0.5V174.5h-0.5V175.5h-0.5V175.6h-0.5V176.4h-0.5V172.7h-0.5V173.7h-0.5V175.1h-0.5V174.2h-0.5V173.3h-0.5V173.1h-0.5V174.3h-0.5V172.9h-0.5V175.1h-0.5V173.9h-0.5V179.5h-0.5V180.6h-0.5V181.6h-0.5V180.9h-0.5V173.3h-0.5V174.0h-0.5V173.7h-0.5V175.2h-0.5V174.6h-0.5V174.9h-0.5V181.1h-0.5V179.9h-0.5V172.5h-0.5V172.8h-0.5V174.0h-0.5V175.1h-0.5V173.1h-0.5V173.1h-0.5V178.9h-0.5V178.9h-0.5V180.4h-0.5V180.3h-0.5V173.6h-0.5V173.2h-0.5V173.6h-0.5V173.7h-0.5V172.9h-0.5V173.6h-0.5V181.2h-0.5V181.3h-0.5V175.5h-0.5V173.6h-0.5V174.0h-0.5V174.9h-0.5V176.7h-0.5V177.7h-0.5V176.2h-0.5V175.8h-0.5V176.7h-0.5V175.8h-0.5V176.3h-0.5V176.0h-0.5V175.9h-0.5V175.6h-0.5V178.5h-0.5V178.5h-0.5V183.6h-0.5V183.9h-0.5V183.9h-0.5V183.9h-0.5V175.0h-0.5V173.4h-0.5V173.8h-0.5V175.0h-0.5V173.6h-0.5V175.0h-0.5V175.3h-0.5V173.5h-0.5V178.9h-0.5V178.9h-0.5V177.6h-0.5V176.3h-0.5V183.9h-0.5V182.8h-0.5V174.7h-0.5V176.5h-0.5V177.5h-0.5V176.1h-0.5V178.1h-0.5V178.6h-0.5V179.9h-0.5V180.5h-0.5V176.5h-0.5V175.1h-0.5V186.0h-0.5V185.6h-0.5V188.3h-0.5V188.4h-0.5V178.9h-0.5V178.1h-0.5V187.8h-0.5V187.6h-0.5V183.4h-0.5V183.9h-0.5V177.6h-0.5V177.5h-0.5V188.2h-0.5V189.1h-0.5V176.5h-0.5V177.4h-0.5V184.7h-0.5V185.0h-0.5V177.0h-0.5V177.8h-0.5V179.1h-0.5V178.6h-0.5V179.6h-0.5V179.0h-0.5V182.1h-0.5V181.8h-0.5V175.5h-0.5V176.6h-0.5V186.3h-0.5V186.5h-0.5V179.9h-0.5V180.0h-0.5V178.0h-0.5V178.2h-0.5V176.0h-0.5V177.1h-0.5V177.4h-0.5V177.3h-0.5V179.0h-0.5V178.5h-0.5V183.9h-0.5V183.3h-0.5V185.9h-0.5V186.5h-0.5V178.2h-0.5V177.6h-0.5V182.6h-0.5V182.9h-0.5V178.0h-0.5V178.5h-0.5V178.8h-0.5V178.6h-0.5V176.9h-0.5V177.9h-0.5V180.0h-0.5V179.8h-0.5V178.1h-0.5V177.6h-0.5V186.3h-0.5V185.4h-0.5V177.6h-0.5V177.9h-0.5V183.3h-0.5V182.8h-0.5V184.0h-0.5V183.0h-0.5V179.2h-0.5V180.7h-0.5V175.7h-0.5V174.5h-0.5V180.2h-0.5V180.4h-0.5V187.3h-0.5V186.9h-0.5V175.7h-0.5V175.4h-0.5V175.0h-0.5V175.5h-0.5V178.2h-0.5V177.9h-0.5V183.9h-0.5V182.9h-0.5V173.7h-0.5V174.4h-0.5V179.3h-0.5V178.9h-0.5V173.8h-0.5V173.5h-0.5V174.6h-0.5V173.5h-0.5V179.7h-0.5V180.2h-0.5V173.6h-0.5V173.5h-0.5V177.4h-0.5V176.5h-0.5V173.7h-0.5V174.3h-0.5V179.0h-0.5V178.7h-0.5V177.6h-0.5V177.6h-0.5V171.8h-0.5V171.9h-0.5V179.0h-0.5V178.3h-0.5V170.0h-0.5V171.0h-0.5V169.6h-0.5V170.3h-0.5V172.3h-0.5V172.2h-0.5V174.6h-0.5V175.0h-0.5V177.2h-0.5V175.3h-0.5V172.1h-0.5V172.0h-0.5V171.8h-0.5V171.5h-0.5V166.6h-0.5V166.6h-0.5V166.9h-0.5V167.5h-0.5V170.5h-0.5V170.7h-0.5V167.4h-0.5V167.3h-0.5V173.1h-0.5V172.8h-0.5V166.7h-0.5V166.7h-0.5V173.4h-0.5V172.0h-0.5V165.7h-0.5V166.3h-0.5V168.4h-0.5V168.0h-0.5V165.5h-0.5V165.0h-0.5V170.8h-0.5V170.6h-0.5V170.8h-0.5V170.7h-0.5V165.1h-0.5V165.5h-0.5V164.2h-0.5V163.9h-0.5V168.1h-0.5V167.5h-0.5V162.8h-0.5V163.0h-0.5V167.3h-0.5V166.8h-0.5V162.6h-0.5V161.7h-0.5V162.4h-0.5V162.1h-0.5V164.4h-0.5V164.2h-0.5V160.5h-0.5V160.4h-0.5V160.9h-0.5V160.4h-0.5V161.6h-0.5V161.4h-0.5V163.0h-0.5V162.8h-0.5V163.2h-0.5V162.6h-0.5V161.4h-0.5V161.1h-0.5V158.9h-0.5V158.9h-0.5V158.6h-0.5V158.5h-0.5V157.8h-0.5V157.6h-0.5V158.6h-0.5V158.5h-0.5V156.9h-0.5V156.8h-0.5V158.4h-0.5V158.0h-0.5V157.0h-0.5V156.7h-0.5V156.3h-0.5V155.8h-0.5V155.0h-0.5V154.6h-0.5V155.0h-0.5V154.4h-0.5V153.9h-0.5V153.5h-0.5V153.0h-0.5V152.8h-0.5V152.9h-0.5V152.7h-0.5V152.6h-0.5V152.5h-0.5V152.2h-0.5V152.0h-0.5V151.9h-0.5V151.7h-0.5V151.6h-0.5V151.6h-0.5Z" fill="#5a5e62"/>
<rect x="651.4" y="62.6" width="27.2" height="180.1" fill="#8a8634" fill-opacity="0.42"/>
<path d="M516.2 245.4 C516.9000000000001 248.4 517.8000000000001 249.1 521.2 249.1 L521.2 250.9 C517.8000000000001 250.9 516.9000000000001 251.6 516.2 254.6 C515.5 251.6 514.6 250.9 511.20000000000005 250.9 L511.20000000000005 249.1 C514.6 249.1 515.5 248.4 516.2 245.4Z" fill="#5c5f62"/>
<path d="M510.5 203.4 C514 203.4 515.6 202.5 516.4 199.6 L516.4 209 C515.6 206.2 514 205.3 510.5 205.3Z" fill="#5c5f62"/>
<path d="M388 195.5 L392.5 195 L395 191 L398 181 L401.5 174 L410 179 L425 186 L445 192 L461.5 195 L508 195 L508 196.2 L388 196.2Z" fill="#2f3438"/>
<text x="389.00" y="74.80" font-size="11" fill="#72767a" style="color:#72767a" text-anchor="start" textLength="21.00" lengthAdjust="spacingAndGlyphs">Fine</text>
<text x="389.00" y="109.40" font-size="11" fill="#72767a" style="color:#72767a" text-anchor="start" textLength="23.78" lengthAdjust="spacingAndGlyphs">Peak</text>
<text x="389.00" y="143.50" font-size="11" fill="#72767a" style="color:#72767a" text-anchor="start" textLength="29.99" lengthAdjust="spacingAndGlyphs">Curve</text>
<text x="434.50" y="89.80" font-size="12" fill="#c4c6c7" style="color:#c4c6c7" text-anchor="start" textLength="27.00" lengthAdjust="spacingAndGlyphs">1200</text>
<text x="433.00" y="124.00" font-size="12" fill="#c4c6c7" style="color:#c4c6c7" text-anchor="start" textLength="30.00" lengthAdjust="spacingAndGlyphs">-40 %</text>
<text x="436.00" y="159.00" font-size="12" fill="#c4c6c7" style="color:#c4c6c7" text-anchor="start" textLength="23.50" lengthAdjust="spacingAndGlyphs">2.95</text>
<text x="402.60" y="230.60" font-size="11.5" fill="#f2de3a" style="color:#f2de3a;stroke-width:0.25px" text-anchor="start" textLength="25.20" lengthAdjust="spacingAndGlyphs">Loop</text>
<text x="468.00" y="230.60" font-size="11.5" fill="#c4c6c7" style="color:#c4c6c7" text-anchor="start" textLength="24.99" lengthAdjust="spacingAndGlyphs">Crop</text>
<text x="402.70" y="272.60" font-size="11.5" fill="#1a1e23" style="color:#1a1e23;stroke-width:0.25px" text-anchor="start" textLength="26.50" lengthAdjust="spacingAndGlyphs">Point</text>
<text x="405.70" y="297.10" font-size="11" fill="#d8dadb" style="color:#d8dadb" text-anchor="start" textLength="20.10" lengthAdjust="spacingAndGlyphs">Size</text>
<text x="402.60" y="322.10" font-size="11" fill="#d8dadb" style="color:#d8dadb" text-anchor="start" textLength="26.50" lengthAdjust="spacingAndGlyphs">Pitch</text>
<text x="403.20" y="347.10" font-size="11" fill="#d8dadb" style="color:#d8dadb" text-anchor="start" textLength="25.00" lengthAdjust="spacingAndGlyphs">Level</text>
<text x="401.50" y="372.10" font-size="11" fill="#d8dadb" style="color:#d8dadb" text-anchor="start" textLength="28.70" lengthAdjust="spacingAndGlyphs">Delay</text>
<text x="405.30" y="393.30" font-size="11" fill="#c4c6c7" style="color:#c4c6c7" text-anchor="start" textLength="20.58" lengthAdjust="spacingAndGlyphs">Link</text>
<text x="466.40" y="268.70" font-size="11" fill="#72767a" style="color:#72767a" text-anchor="start" textLength="27.61" lengthAdjust="spacingAndGlyphs">Scale</text>
<text x="460.10" y="320.60" font-size="11.5" fill="#c4c6c7" style="color:#c4c6c7" text-anchor="start" textLength="40.80" lengthAdjust="spacingAndGlyphs">-63.8 %</text>
<text x="459.40" y="346.90" font-size="11" fill="#c4c6c7" style="color:#c4c6c7" text-anchor="start" textLength="42.20" lengthAdjust="spacingAndGlyphs">Random</text>
<text x="467.70" y="386.00" font-size="11" fill="#c4c6c7" style="color:#c4c6c7" text-anchor="start" textLength="26.30" lengthAdjust="spacingAndGlyphs">Mute</text>
<text x="545.25" y="268.7" font-size="12" fill="#72767a" style="color:#72767a" text-anchor="middle">1</text>
<text x="527.65" y="320.80" font-size="11.5" fill="#c4c6c7" style="color:#c4c6c7" text-anchor="start" textLength="35.80" lengthAdjust="spacingAndGlyphs">12.0 %</text>
<text x="599.64" y="268.7" font-size="12" fill="#72767a" style="color:#72767a" text-anchor="middle">2</text>
<text x="582.04" y="320.80" font-size="11.5" fill="#c4c6c7" style="color:#c4c6c7" text-anchor="start" textLength="35.80" lengthAdjust="spacingAndGlyphs">68.0 %</text>
<text x="654.03" y="268.7" font-size="12" fill="#72767a" style="color:#72767a" text-anchor="middle">3</text>
<text x="636.43" y="320.80" font-size="11.5" fill="#c4c6c7" style="color:#c4c6c7" text-anchor="start" textLength="35.80" lengthAdjust="spacingAndGlyphs">9.00 %</text>
<text x="708.42" y="268.7" font-size="12" fill="#72767a" style="color:#72767a" text-anchor="middle">4</text>
<text x="690.82" y="320.80" font-size="11.5" fill="#c4c6c7" style="color:#c4c6c7" text-anchor="start" textLength="35.80" lengthAdjust="spacingAndGlyphs">87.0 %</text>
<text x="762.81" y="268.7" font-size="12" fill="#72767a" style="color:#72767a" text-anchor="middle">5</text>
<text x="745.21" y="320.80" font-size="11.5" fill="#c4c6c7" style="color:#c4c6c7" text-anchor="start" textLength="35.80" lengthAdjust="spacingAndGlyphs">79.0 %</text>
<text x="817.20" y="268.7" font-size="12" fill="#72767a" style="color:#72767a" text-anchor="middle">6</text>
<text x="799.60" y="320.80" font-size="11.5" fill="#c4c6c7" style="color:#c4c6c7" text-anchor="start" textLength="35.80" lengthAdjust="spacingAndGlyphs">40.0 %</text>
<text x="871.59" y="268.7" font-size="12" fill="#72767a" style="color:#72767a" text-anchor="middle">7</text>
<text x="853.99" y="320.80" font-size="11.5" fill="#c4c6c7" style="color:#c4c6c7" text-anchor="start" textLength="35.80" lengthAdjust="spacingAndGlyphs">39.0 %</text>
<text x="925.98" y="268.7" font-size="12" fill="#72767a" style="color:#72767a" text-anchor="middle">8</text>
<text x="908.38" y="320.80" font-size="11.5" fill="#c4c6c7" style="color:#c4c6c7" text-anchor="start" textLength="35.80" lengthAdjust="spacingAndGlyphs">54.0 %</text>
<text x="980.37" y="268.7" font-size="12" fill="#72767a" style="color:#72767a" text-anchor="middle">9</text>
<text x="962.77" y="320.80" font-size="11.5" fill="#c4c6c7" style="color:#c4c6c7" text-anchor="start" textLength="35.80" lengthAdjust="spacingAndGlyphs">37.0 %</text>
<text x="1034.76" y="268.7" font-size="12" fill="#72767a" style="color:#72767a" text-anchor="middle">10</text>
<text x="1017.16" y="320.80" font-size="11.5" fill="#c4c6c7" style="color:#c4c6c7" text-anchor="start" textLength="35.80" lengthAdjust="spacingAndGlyphs">8.00 %</text>
<text x="1089.15" y="268.7" font-size="12" fill="#72767a" style="color:#72767a" text-anchor="middle">11</text>
<text x="1071.55" y="320.80" font-size="11.5" fill="#c4c6c7" style="color:#c4c6c7" text-anchor="start" textLength="35.80" lengthAdjust="spacingAndGlyphs">1.00 %</text>
<text x="1143.54" y="268.7" font-size="12" fill="#72767a" style="color:#72767a" text-anchor="middle">12</text>
<text x="1125.94" y="320.80" font-size="11.5" fill="#c4c6c7" style="color:#c4c6c7" text-anchor="start" textLength="35.80" lengthAdjust="spacingAndGlyphs">56.0 %</text>
<text x="1197.93" y="268.7" font-size="12" fill="#72767a" style="color:#72767a" text-anchor="middle">13</text>
<text x="1180.33" y="320.80" font-size="11.5" fill="#c4c6c7" style="color:#c4c6c7" text-anchor="start" textLength="35.80" lengthAdjust="spacingAndGlyphs">50.0 %</text>
</svg>
</div>
</body></html>
